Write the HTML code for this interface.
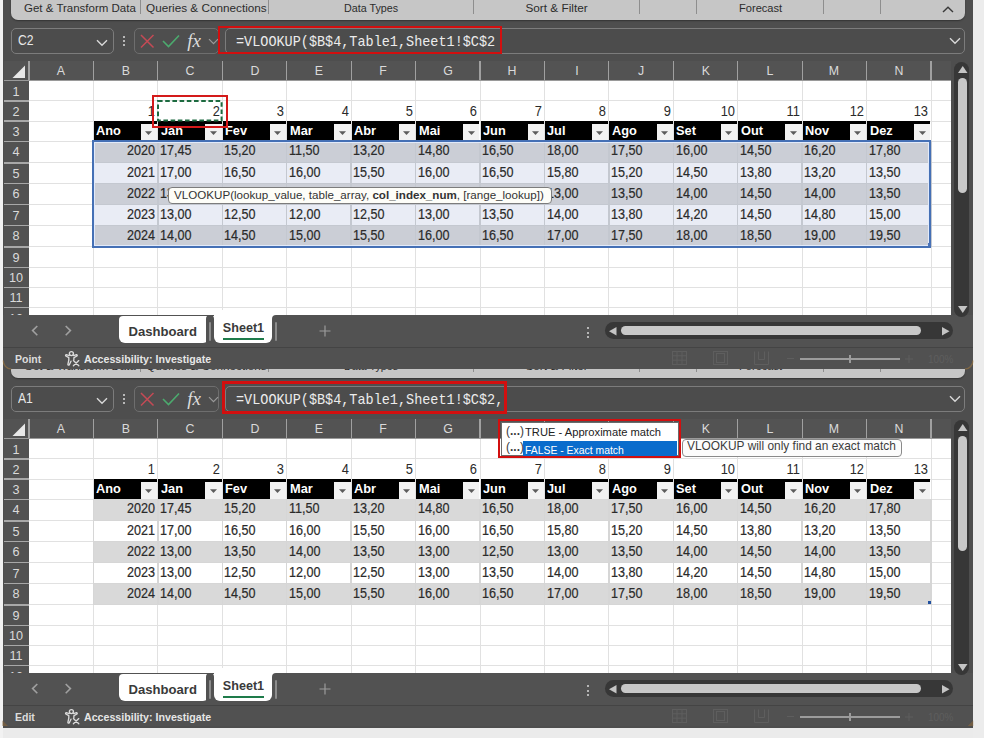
<!DOCTYPE html>
<html><head><meta charset="utf-8"><style>
*{margin:0;padding:0}
html,body{width:984px;height:738px;overflow:hidden;background:#ebebeb;font-family:"Liberation Sans",sans-serif;}
#w{position:absolute;left:0;top:0;width:984px;height:738px;overflow:hidden}
#w div,#w svg{position:absolute}
</style></head><body><div id="w">
<div style="left:0;top:0;width:3px;height:738px;background:#f2f2f2"></div>
<div style="left:973.2px;top:0;width:10.8px;height:738px;background:#ececec"></div>
<div style="left:0;top:0;width:984px;height:738px">
<div style="left:3.00px;top:300.00px;width:970.20px;height:427.60px;background:#4e4e4e;"></div>
<div style="left:10.60px;top:258.00px;width:954.00px;height:119.50px;background:#c6c6c6;border-bottom-left-radius:7px;border-bottom-right-radius:7px;box-shadow:0 1px 1.5px rgba(0,0,0,0.35);"></div>
<div style="left:23.80px;top:360.61px;font-family:'Liberation Sans',sans-serif;font-size:11.8px;line-height:11.8px;color:#2c2c2c;white-space:pre;transform:scaleX(0.975);transform-origin:left top;">Get &amp; Transform Data</div>
<div style="left:145.50px;top:360.61px;font-family:'Liberation Sans',sans-serif;font-size:11.8px;line-height:11.8px;color:#2c2c2c;white-space:pre;transform:scaleX(0.995);transform-origin:left top;">Queries &amp; Connections</div>
<div style="left:344.20px;top:360.61px;font-family:'Liberation Sans',sans-serif;font-size:11.8px;line-height:11.8px;color:#2c2c2c;white-space:pre;transform:scaleX(0.91);transform-origin:left top;">Data Types</div>
<div style="left:525.40px;top:360.61px;font-family:'Liberation Sans',sans-serif;font-size:11.8px;line-height:11.8px;color:#2c2c2c;white-space:pre;">Sort &amp; Filter</div>
<div style="left:738.80px;top:360.61px;font-family:'Liberation Sans',sans-serif;font-size:11.8px;line-height:11.8px;color:#2c2c2c;white-space:pre;transform:scaleX(0.94);transform-origin:left top;">Forecast</div>
<div style="left:140.20px;top:353.00px;width:1.00px;height:19.00px;background:#8e8e8e;"></div>
<div style="left:267.50px;top:353.00px;width:1.00px;height:19.00px;background:#8e8e8e;"></div>
<div style="left:472.50px;top:353.00px;width:1.00px;height:19.00px;background:#8e8e8e;"></div>
<div style="left:638.80px;top:353.00px;width:1.00px;height:19.00px;background:#8e8e8e;"></div>
<div style="left:696.00px;top:353.00px;width:1.00px;height:19.00px;background:#8e8e8e;"></div>
<div style="left:823.20px;top:353.00px;width:1.00px;height:19.00px;background:#8e8e8e;"></div>
<div style="left:880.40px;top:353.00px;width:1.00px;height:19.00px;background:#8e8e8e;"></div>
<div style="left:11.00px;top:386.00px;width:103.00px;height:26.00px;box-sizing:border-box;border:1.5px solid #7c7c7c;border-radius:5px;background:#4c4c4c;"></div>
<div style="left:17.60px;top:391.23px;font-family:'Liberation Sans',sans-serif;font-size:14.8px;line-height:14.8px;color:#e8e8e8;white-space:pre;transform:scaleX(0.82);transform-origin:left top;">A1</div>
<svg style="left:96px;top:396.5px" width="12" height="8"><path d="M1 1.2 L6 6.2 L11 1.2" stroke="#d8d8d8" stroke-width="1.4" fill="none"/></svg>
<div style="left:122.90px;top:393.60px;width:2.20px;height:2.20px;background:#dcdcdc;border-radius:1px;"></div>
<div style="left:122.90px;top:397.60px;width:2.20px;height:2.20px;background:#dcdcdc;border-radius:1px;"></div>
<div style="left:122.90px;top:401.60px;width:2.20px;height:2.20px;background:#dcdcdc;border-radius:1px;"></div>
<div style="left:134.00px;top:386.00px;width:84.50px;height:25.50px;box-sizing:border-box;border:1.3px solid #6e6e6e;border-radius:5px;"></div>
<svg style="left:140px;top:391.5px" width="15" height="15"><path d="M1 1 L13.5 13.5 M13.5 1 L1 13.5" stroke="#c44a55" stroke-width="1.5" fill="none"/></svg>
<svg style="left:162px;top:391.5px" width="18" height="14"><path d="M1 7 L6.5 12.5 L17 1.5" stroke="#4caa6e" stroke-width="1.6" fill="none"/></svg>
<div style="left:187.20px;top:388.70px;font-family:'Liberation Serif',serif;font-size:19px;line-height:19px;color:#dcdcdc;white-space:pre;font-style:italic;">fx</div>
<svg style="left:207.5px;top:395.5px" width="11" height="8"><path d="M1 1.2 L5.5 5.7 L10 1.2" stroke="#9a9a9a" stroke-width="1.2" fill="none"/></svg>
<div style="left:224.50px;top:386.40px;width:740.10px;height:25.20px;box-sizing:border-box;border:1.5px solid #7c7c7c;border-radius:5px;background:#4c4c4c;"></div>
<div style="left:236.00px;top:393.02px;font-family:'Liberation Mono',monospace;font-size:14.8px;line-height:14.8px;color:#ececec;white-space:pre;transform:scaleX(0.912);transform-origin:left top;">=VLOOKUP($B$4,Table1,Sheet1!$C$2,</div>
<svg style="left:949px;top:394.5px" width="12" height="8"><path d="M1 1.2 L6 6.2 L11 1.2" stroke="#d8d8d8" stroke-width="1.4" fill="none"/></svg>
<div style="left:4.00px;top:418.50px;width:947.00px;height:20.20px;background:#535353;"></div>
<svg style="left:12px;top:422.5px" width="14" height="14"><path d="M13 0.5 L13 13 L0.5 13 Z" fill="#e8e8e8"/></svg>
<div style="left:28.40px;top:419.00px;width:1.20px;height:20.00px;background:#a0a0a0;"></div>
<div style="left:92.83px;top:419.00px;width:1.20px;height:20.00px;background:#a0a0a0;"></div>
<div style="left:157.26px;top:419.00px;width:1.20px;height:20.00px;background:#a0a0a0;"></div>
<div style="left:221.69px;top:419.00px;width:1.20px;height:20.00px;background:#a0a0a0;"></div>
<div style="left:286.12px;top:419.00px;width:1.20px;height:20.00px;background:#a0a0a0;"></div>
<div style="left:350.55px;top:419.00px;width:1.20px;height:20.00px;background:#a0a0a0;"></div>
<div style="left:414.98px;top:419.00px;width:1.20px;height:20.00px;background:#a0a0a0;"></div>
<div style="left:479.41px;top:419.00px;width:1.20px;height:20.00px;background:#a0a0a0;"></div>
<div style="left:543.84px;top:419.00px;width:1.20px;height:20.00px;background:#a0a0a0;"></div>
<div style="left:608.27px;top:419.00px;width:1.20px;height:20.00px;background:#a0a0a0;"></div>
<div style="left:672.70px;top:419.00px;width:1.20px;height:20.00px;background:#a0a0a0;"></div>
<div style="left:737.13px;top:419.00px;width:1.20px;height:20.00px;background:#a0a0a0;"></div>
<div style="left:801.56px;top:419.00px;width:1.20px;height:20.00px;background:#a0a0a0;"></div>
<div style="left:865.99px;top:419.00px;width:1.20px;height:20.00px;background:#a0a0a0;"></div>
<div style="left:930.42px;top:419.00px;width:1.20px;height:20.00px;background:#a0a0a0;"></div>
<div style="left:31.22px;top:421.72px;width:60px;text-align:center;font-family:'Liberation Sans',sans-serif;font-size:13px;line-height:13px;color:#dadada;white-space:pre;transform:scaleX(0.95);transform-origin:center top;">A</div>
<div style="left:95.65px;top:421.72px;width:60px;text-align:center;font-family:'Liberation Sans',sans-serif;font-size:13px;line-height:13px;color:#dadada;white-space:pre;transform:scaleX(0.95);transform-origin:center top;">B</div>
<div style="left:160.08px;top:421.72px;width:60px;text-align:center;font-family:'Liberation Sans',sans-serif;font-size:13px;line-height:13px;color:#dadada;white-space:pre;transform:scaleX(0.95);transform-origin:center top;">C</div>
<div style="left:224.51px;top:421.72px;width:60px;text-align:center;font-family:'Liberation Sans',sans-serif;font-size:13px;line-height:13px;color:#dadada;white-space:pre;transform:scaleX(0.95);transform-origin:center top;">D</div>
<div style="left:288.94px;top:421.72px;width:60px;text-align:center;font-family:'Liberation Sans',sans-serif;font-size:13px;line-height:13px;color:#dadada;white-space:pre;transform:scaleX(0.95);transform-origin:center top;">E</div>
<div style="left:353.37px;top:421.72px;width:60px;text-align:center;font-family:'Liberation Sans',sans-serif;font-size:13px;line-height:13px;color:#dadada;white-space:pre;transform:scaleX(0.95);transform-origin:center top;">F</div>
<div style="left:417.80px;top:421.72px;width:60px;text-align:center;font-family:'Liberation Sans',sans-serif;font-size:13px;line-height:13px;color:#dadada;white-space:pre;transform:scaleX(0.95);transform-origin:center top;">G</div>
<div style="left:482.23px;top:421.72px;width:60px;text-align:center;font-family:'Liberation Sans',sans-serif;font-size:13px;line-height:13px;color:#dadada;white-space:pre;transform:scaleX(0.95);transform-origin:center top;">H</div>
<div style="left:546.66px;top:421.72px;width:60px;text-align:center;font-family:'Liberation Sans',sans-serif;font-size:13px;line-height:13px;color:#dadada;white-space:pre;transform:scaleX(0.95);transform-origin:center top;">I</div>
<div style="left:611.09px;top:421.72px;width:60px;text-align:center;font-family:'Liberation Sans',sans-serif;font-size:13px;line-height:13px;color:#dadada;white-space:pre;transform:scaleX(0.95);transform-origin:center top;">J</div>
<div style="left:675.52px;top:421.72px;width:60px;text-align:center;font-family:'Liberation Sans',sans-serif;font-size:13px;line-height:13px;color:#dadada;white-space:pre;transform:scaleX(0.95);transform-origin:center top;">K</div>
<div style="left:739.95px;top:421.72px;width:60px;text-align:center;font-family:'Liberation Sans',sans-serif;font-size:13px;line-height:13px;color:#dadada;white-space:pre;transform:scaleX(0.95);transform-origin:center top;">L</div>
<div style="left:804.38px;top:421.72px;width:60px;text-align:center;font-family:'Liberation Sans',sans-serif;font-size:13px;line-height:13px;color:#dadada;white-space:pre;transform:scaleX(0.95);transform-origin:center top;">M</div>
<div style="left:868.81px;top:421.72px;width:60px;text-align:center;font-family:'Liberation Sans',sans-serif;font-size:13px;line-height:13px;color:#dadada;white-space:pre;transform:scaleX(0.95);transform-origin:center top;">N</div>
<div style="left:29.00px;top:438.70px;width:922.00px;height:234.30px;background:#fff;"></div>
<div style="left:4.00px;top:438.70px;width:24.60px;height:234.30px;background:#525252;"></div>
<div style="left:4.00px;top:458.20px;width:24.60px;height:1.40px;background:#a8a8a8;"></div>
<div style="left:4.00px;top:478.40px;width:24.60px;height:1.40px;background:#a8a8a8;"></div>
<div style="left:4.00px;top:498.50px;width:24.60px;height:1.40px;background:#a8a8a8;"></div>
<div style="left:4.00px;top:520.20px;width:24.60px;height:1.40px;background:#a8a8a8;"></div>
<div style="left:4.00px;top:540.90px;width:24.60px;height:1.40px;background:#a8a8a8;"></div>
<div style="left:4.00px;top:562.00px;width:24.60px;height:1.40px;background:#a8a8a8;"></div>
<div style="left:4.00px;top:582.90px;width:24.60px;height:1.40px;background:#a8a8a8;"></div>
<div style="left:4.00px;top:604.20px;width:24.60px;height:1.40px;background:#a8a8a8;"></div>
<div style="left:4.00px;top:624.60px;width:24.60px;height:1.40px;background:#a8a8a8;"></div>
<div style="left:4.00px;top:644.90px;width:24.60px;height:1.40px;background:#a8a8a8;"></div>
<div style="left:4.00px;top:665.10px;width:24.60px;height:1.40px;background:#a8a8a8;"></div>
<div style="left:4.20px;top:442.57px;width:24px;text-align:center;font-family:'Liberation Sans',sans-serif;font-size:13.3px;line-height:13.3px;color:#dadada;white-space:pre;transform:scaleX(0.95);transform-origin:center top;">1</div>
<div style="left:4.20px;top:462.77px;width:24px;text-align:center;font-family:'Liberation Sans',sans-serif;font-size:13.3px;line-height:13.3px;color:#dadada;white-space:pre;transform:scaleX(0.95);transform-origin:center top;">2</div>
<div style="left:4.20px;top:482.97px;width:24px;text-align:center;font-family:'Liberation Sans',sans-serif;font-size:13.3px;line-height:13.3px;color:#dadada;white-space:pre;transform:scaleX(0.95);transform-origin:center top;">3</div>
<div style="left:4.20px;top:503.07px;width:24px;text-align:center;font-family:'Liberation Sans',sans-serif;font-size:13.3px;line-height:13.3px;color:#dadada;white-space:pre;transform:scaleX(0.95);transform-origin:center top;">4</div>
<div style="left:4.20px;top:524.77px;width:24px;text-align:center;font-family:'Liberation Sans',sans-serif;font-size:13.3px;line-height:13.3px;color:#dadada;white-space:pre;transform:scaleX(0.95);transform-origin:center top;">5</div>
<div style="left:4.20px;top:545.47px;width:24px;text-align:center;font-family:'Liberation Sans',sans-serif;font-size:13.3px;line-height:13.3px;color:#dadada;white-space:pre;transform:scaleX(0.95);transform-origin:center top;">6</div>
<div style="left:4.20px;top:566.57px;width:24px;text-align:center;font-family:'Liberation Sans',sans-serif;font-size:13.3px;line-height:13.3px;color:#dadada;white-space:pre;transform:scaleX(0.95);transform-origin:center top;">7</div>
<div style="left:4.20px;top:587.47px;width:24px;text-align:center;font-family:'Liberation Sans',sans-serif;font-size:13.3px;line-height:13.3px;color:#dadada;white-space:pre;transform:scaleX(0.95);transform-origin:center top;">8</div>
<div style="left:4.20px;top:608.77px;width:24px;text-align:center;font-family:'Liberation Sans',sans-serif;font-size:13.3px;line-height:13.3px;color:#dadada;white-space:pre;transform:scaleX(0.95);transform-origin:center top;">9</div>
<div style="left:4.20px;top:629.17px;width:24px;text-align:center;font-family:'Liberation Sans',sans-serif;font-size:13.3px;line-height:13.3px;color:#dadada;white-space:pre;transform:scaleX(0.95);transform-origin:center top;">10</div>
<div style="left:4.20px;top:649.47px;width:24px;text-align:center;font-family:'Liberation Sans',sans-serif;font-size:13.3px;line-height:13.3px;color:#dadada;white-space:pre;transform:scaleX(0.95);transform-origin:center top;">11</div>
<div style="left:4.20px;top:669.67px;width:24px;text-align:center;font-family:'Liberation Sans',sans-serif;font-size:13.3px;line-height:13.3px;color:#dadada;white-space:pre;transform:scaleX(0.95);transform-origin:center top;">12</div>
<div style="left:4.00px;top:438.20px;width:947.00px;height:1.00px;background:#9a9a9a;"></div>
<div style="left:92.93px;top:438.70px;width:1.00px;height:234.30px;background:#e1e1e1;"></div>
<div style="left:157.36px;top:438.70px;width:1.00px;height:234.30px;background:#e1e1e1;"></div>
<div style="left:221.79px;top:438.70px;width:1.00px;height:234.30px;background:#e1e1e1;"></div>
<div style="left:286.22px;top:438.70px;width:1.00px;height:234.30px;background:#e1e1e1;"></div>
<div style="left:350.65px;top:438.70px;width:1.00px;height:234.30px;background:#e1e1e1;"></div>
<div style="left:415.08px;top:438.70px;width:1.00px;height:234.30px;background:#e1e1e1;"></div>
<div style="left:479.51px;top:438.70px;width:1.00px;height:234.30px;background:#e1e1e1;"></div>
<div style="left:543.94px;top:438.70px;width:1.00px;height:234.30px;background:#e1e1e1;"></div>
<div style="left:608.37px;top:438.70px;width:1.00px;height:234.30px;background:#e1e1e1;"></div>
<div style="left:672.80px;top:438.70px;width:1.00px;height:234.30px;background:#e1e1e1;"></div>
<div style="left:737.23px;top:438.70px;width:1.00px;height:234.30px;background:#e1e1e1;"></div>
<div style="left:801.66px;top:438.70px;width:1.00px;height:234.30px;background:#e1e1e1;"></div>
<div style="left:866.09px;top:438.70px;width:1.00px;height:234.30px;background:#e1e1e1;"></div>
<div style="left:930.52px;top:438.70px;width:1.00px;height:234.30px;background:#e1e1e1;"></div>
<div style="left:29.00px;top:458.40px;width:922.00px;height:1.00px;background:#e1e1e1;"></div>
<div style="left:29.00px;top:478.60px;width:922.00px;height:1.00px;background:#e1e1e1;"></div>
<div style="left:29.00px;top:498.70px;width:922.00px;height:1.00px;background:#e1e1e1;"></div>
<div style="left:29.00px;top:520.40px;width:922.00px;height:1.00px;background:#e1e1e1;"></div>
<div style="left:29.00px;top:541.10px;width:922.00px;height:1.00px;background:#e1e1e1;"></div>
<div style="left:29.00px;top:562.20px;width:922.00px;height:1.00px;background:#e1e1e1;"></div>
<div style="left:29.00px;top:583.10px;width:922.00px;height:1.00px;background:#e1e1e1;"></div>
<div style="left:29.00px;top:604.40px;width:922.00px;height:1.00px;background:#e1e1e1;"></div>
<div style="left:29.00px;top:624.80px;width:922.00px;height:1.00px;background:#e1e1e1;"></div>
<div style="left:29.00px;top:645.10px;width:922.00px;height:1.00px;background:#e1e1e1;"></div>
<div style="left:29.00px;top:665.30px;width:922.00px;height:1.00px;background:#e1e1e1;"></div>
<div style="left:95.26px;top:462.26px;width:60px;text-align:right;font-family:'Liberation Sans',sans-serif;font-size:14px;line-height:14px;color:#2a2a2a;white-space:pre;transform:scaleX(0.92);transform-origin:right top;">1</div>
<div style="left:159.69px;top:462.26px;width:60px;text-align:right;font-family:'Liberation Sans',sans-serif;font-size:14px;line-height:14px;color:#2a2a2a;white-space:pre;transform:scaleX(0.92);transform-origin:right top;">2</div>
<div style="left:224.12px;top:462.26px;width:60px;text-align:right;font-family:'Liberation Sans',sans-serif;font-size:14px;line-height:14px;color:#2a2a2a;white-space:pre;transform:scaleX(0.92);transform-origin:right top;">3</div>
<div style="left:288.55px;top:462.26px;width:60px;text-align:right;font-family:'Liberation Sans',sans-serif;font-size:14px;line-height:14px;color:#2a2a2a;white-space:pre;transform:scaleX(0.92);transform-origin:right top;">4</div>
<div style="left:352.98px;top:462.26px;width:60px;text-align:right;font-family:'Liberation Sans',sans-serif;font-size:14px;line-height:14px;color:#2a2a2a;white-space:pre;transform:scaleX(0.92);transform-origin:right top;">5</div>
<div style="left:417.41px;top:462.26px;width:60px;text-align:right;font-family:'Liberation Sans',sans-serif;font-size:14px;line-height:14px;color:#2a2a2a;white-space:pre;transform:scaleX(0.92);transform-origin:right top;">6</div>
<div style="left:481.84px;top:462.26px;width:60px;text-align:right;font-family:'Liberation Sans',sans-serif;font-size:14px;line-height:14px;color:#2a2a2a;white-space:pre;transform:scaleX(0.92);transform-origin:right top;">7</div>
<div style="left:546.27px;top:462.26px;width:60px;text-align:right;font-family:'Liberation Sans',sans-serif;font-size:14px;line-height:14px;color:#2a2a2a;white-space:pre;transform:scaleX(0.92);transform-origin:right top;">8</div>
<div style="left:610.70px;top:462.26px;width:60px;text-align:right;font-family:'Liberation Sans',sans-serif;font-size:14px;line-height:14px;color:#2a2a2a;white-space:pre;transform:scaleX(0.92);transform-origin:right top;">9</div>
<div style="left:675.13px;top:462.26px;width:60px;text-align:right;font-family:'Liberation Sans',sans-serif;font-size:14px;line-height:14px;color:#2a2a2a;white-space:pre;transform:scaleX(0.92);transform-origin:right top;">10</div>
<div style="left:739.56px;top:462.26px;width:60px;text-align:right;font-family:'Liberation Sans',sans-serif;font-size:14px;line-height:14px;color:#2a2a2a;white-space:pre;transform:scaleX(0.92);transform-origin:right top;">11</div>
<div style="left:803.99px;top:462.26px;width:60px;text-align:right;font-family:'Liberation Sans',sans-serif;font-size:14px;line-height:14px;color:#2a2a2a;white-space:pre;transform:scaleX(0.92);transform-origin:right top;">12</div>
<div style="left:868.42px;top:462.26px;width:60px;text-align:right;font-family:'Liberation Sans',sans-serif;font-size:14px;line-height:14px;color:#2a2a2a;white-space:pre;transform:scaleX(0.92);transform-origin:right top;">13</div>
<div style="left:94.03px;top:479.30px;width:63.23px;height:19.90px;background:#000;"></div>
<div style="left:96.43px;top:481.52px;font-family:'Liberation Sans',sans-serif;font-size:13.6px;line-height:13.6px;color:#ffffff;white-space:pre;font-weight:bold;transform:scaleX(0.94);transform-origin:left top;">Ano</div>
<div style="left:141.06px;top:481.70px;width:16.20px;height:17.50px;background:#f2f2f2;"></div>
<svg style="left:145.46px;top:488.60px" width="8" height="5"><path d="M0 0.2 L7 0.2 L3.5 4 Z" fill="#5c5c5c"/></svg>
<div style="left:158.46px;top:479.30px;width:63.23px;height:19.90px;background:#000;"></div>
<div style="left:160.86px;top:481.52px;font-family:'Liberation Sans',sans-serif;font-size:13.6px;line-height:13.6px;color:#ffffff;white-space:pre;font-weight:bold;transform:scaleX(0.94);transform-origin:left top;">Jan</div>
<div style="left:205.49px;top:481.70px;width:16.20px;height:17.50px;background:#f2f2f2;"></div>
<svg style="left:209.89px;top:488.60px" width="8" height="5"><path d="M0 0.2 L7 0.2 L3.5 4 Z" fill="#5c5c5c"/></svg>
<div style="left:222.89px;top:479.30px;width:63.23px;height:19.90px;background:#000;"></div>
<div style="left:225.29px;top:481.52px;font-family:'Liberation Sans',sans-serif;font-size:13.6px;line-height:13.6px;color:#ffffff;white-space:pre;font-weight:bold;transform:scaleX(0.94);transform-origin:left top;">Fev</div>
<div style="left:269.92px;top:481.70px;width:16.20px;height:17.50px;background:#f2f2f2;"></div>
<svg style="left:274.32px;top:488.60px" width="8" height="5"><path d="M0 0.2 L7 0.2 L3.5 4 Z" fill="#5c5c5c"/></svg>
<div style="left:287.32px;top:479.30px;width:63.23px;height:19.90px;background:#000;"></div>
<div style="left:289.72px;top:481.52px;font-family:'Liberation Sans',sans-serif;font-size:13.6px;line-height:13.6px;color:#ffffff;white-space:pre;font-weight:bold;transform:scaleX(0.94);transform-origin:left top;">Mar</div>
<div style="left:334.35px;top:481.70px;width:16.20px;height:17.50px;background:#f2f2f2;"></div>
<svg style="left:338.75px;top:488.60px" width="8" height="5"><path d="M0 0.2 L7 0.2 L3.5 4 Z" fill="#5c5c5c"/></svg>
<div style="left:351.75px;top:479.30px;width:63.23px;height:19.90px;background:#000;"></div>
<div style="left:354.15px;top:481.52px;font-family:'Liberation Sans',sans-serif;font-size:13.6px;line-height:13.6px;color:#ffffff;white-space:pre;font-weight:bold;transform:scaleX(0.94);transform-origin:left top;">Abr</div>
<div style="left:398.78px;top:481.70px;width:16.20px;height:17.50px;background:#f2f2f2;"></div>
<svg style="left:403.18px;top:488.60px" width="8" height="5"><path d="M0 0.2 L7 0.2 L3.5 4 Z" fill="#5c5c5c"/></svg>
<div style="left:416.18px;top:479.30px;width:63.23px;height:19.90px;background:#000;"></div>
<div style="left:418.58px;top:481.52px;font-family:'Liberation Sans',sans-serif;font-size:13.6px;line-height:13.6px;color:#ffffff;white-space:pre;font-weight:bold;transform:scaleX(0.94);transform-origin:left top;">Mai</div>
<div style="left:463.21px;top:481.70px;width:16.20px;height:17.50px;background:#f2f2f2;"></div>
<svg style="left:467.61px;top:488.60px" width="8" height="5"><path d="M0 0.2 L7 0.2 L3.5 4 Z" fill="#5c5c5c"/></svg>
<div style="left:480.61px;top:479.30px;width:63.23px;height:19.90px;background:#000;"></div>
<div style="left:483.01px;top:481.52px;font-family:'Liberation Sans',sans-serif;font-size:13.6px;line-height:13.6px;color:#ffffff;white-space:pre;font-weight:bold;transform:scaleX(0.94);transform-origin:left top;">Jun</div>
<div style="left:527.64px;top:481.70px;width:16.20px;height:17.50px;background:#f2f2f2;"></div>
<svg style="left:532.04px;top:488.60px" width="8" height="5"><path d="M0 0.2 L7 0.2 L3.5 4 Z" fill="#5c5c5c"/></svg>
<div style="left:545.04px;top:479.30px;width:63.23px;height:19.90px;background:#000;"></div>
<div style="left:547.44px;top:481.52px;font-family:'Liberation Sans',sans-serif;font-size:13.6px;line-height:13.6px;color:#ffffff;white-space:pre;font-weight:bold;transform:scaleX(0.94);transform-origin:left top;">Jul</div>
<div style="left:592.07px;top:481.70px;width:16.20px;height:17.50px;background:#f2f2f2;"></div>
<svg style="left:596.47px;top:488.60px" width="8" height="5"><path d="M0 0.2 L7 0.2 L3.5 4 Z" fill="#5c5c5c"/></svg>
<div style="left:609.47px;top:479.30px;width:63.23px;height:19.90px;background:#000;"></div>
<div style="left:611.87px;top:481.52px;font-family:'Liberation Sans',sans-serif;font-size:13.6px;line-height:13.6px;color:#ffffff;white-space:pre;font-weight:bold;transform:scaleX(0.94);transform-origin:left top;">Ago</div>
<div style="left:656.50px;top:481.70px;width:16.20px;height:17.50px;background:#f2f2f2;"></div>
<svg style="left:660.90px;top:488.60px" width="8" height="5"><path d="M0 0.2 L7 0.2 L3.5 4 Z" fill="#5c5c5c"/></svg>
<div style="left:673.90px;top:479.30px;width:63.23px;height:19.90px;background:#000;"></div>
<div style="left:676.30px;top:481.52px;font-family:'Liberation Sans',sans-serif;font-size:13.6px;line-height:13.6px;color:#ffffff;white-space:pre;font-weight:bold;transform:scaleX(0.94);transform-origin:left top;">Set</div>
<div style="left:720.93px;top:481.70px;width:16.20px;height:17.50px;background:#f2f2f2;"></div>
<svg style="left:725.33px;top:488.60px" width="8" height="5"><path d="M0 0.2 L7 0.2 L3.5 4 Z" fill="#5c5c5c"/></svg>
<div style="left:738.33px;top:479.30px;width:63.23px;height:19.90px;background:#000;"></div>
<div style="left:740.73px;top:481.52px;font-family:'Liberation Sans',sans-serif;font-size:13.6px;line-height:13.6px;color:#ffffff;white-space:pre;font-weight:bold;transform:scaleX(0.94);transform-origin:left top;">Out</div>
<div style="left:785.36px;top:481.70px;width:16.20px;height:17.50px;background:#f2f2f2;"></div>
<svg style="left:789.76px;top:488.60px" width="8" height="5"><path d="M0 0.2 L7 0.2 L3.5 4 Z" fill="#5c5c5c"/></svg>
<div style="left:802.76px;top:479.30px;width:63.23px;height:19.90px;background:#000;"></div>
<div style="left:805.16px;top:481.52px;font-family:'Liberation Sans',sans-serif;font-size:13.6px;line-height:13.6px;color:#ffffff;white-space:pre;font-weight:bold;transform:scaleX(0.94);transform-origin:left top;">Nov</div>
<div style="left:849.79px;top:481.70px;width:16.20px;height:17.50px;background:#f2f2f2;"></div>
<svg style="left:854.19px;top:488.60px" width="8" height="5"><path d="M0 0.2 L7 0.2 L3.5 4 Z" fill="#5c5c5c"/></svg>
<div style="left:867.19px;top:479.30px;width:63.23px;height:19.90px;background:#000;"></div>
<div style="left:869.59px;top:481.52px;font-family:'Liberation Sans',sans-serif;font-size:13.6px;line-height:13.6px;color:#ffffff;white-space:pre;font-weight:bold;transform:scaleX(0.94);transform-origin:left top;">Dez</div>
<div style="left:914.22px;top:481.70px;width:16.20px;height:17.50px;background:#f2f2f2;"></div>
<svg style="left:918.62px;top:488.60px" width="8" height="5"><path d="M0 0.2 L7 0.2 L3.5 4 Z" fill="#5c5c5c"/></svg>
<div style="left:93.43px;top:499.20px;width:837.59px;height:21.70px;background:#d9d9d9;"></div>
<div style="left:92.73px;top:499.20px;width:1.40px;height:21.70px;background:#d6d6d6;"></div>
<div style="left:157.16px;top:499.20px;width:1.40px;height:21.70px;background:#d6d6d6;"></div>
<div style="left:221.59px;top:499.20px;width:1.40px;height:21.70px;background:#d6d6d6;"></div>
<div style="left:286.02px;top:499.20px;width:1.40px;height:21.70px;background:#d6d6d6;"></div>
<div style="left:350.45px;top:499.20px;width:1.40px;height:21.70px;background:#d6d6d6;"></div>
<div style="left:414.88px;top:499.20px;width:1.40px;height:21.70px;background:#d6d6d6;"></div>
<div style="left:479.31px;top:499.20px;width:1.40px;height:21.70px;background:#d6d6d6;"></div>
<div style="left:543.74px;top:499.20px;width:1.40px;height:21.70px;background:#d6d6d6;"></div>
<div style="left:608.17px;top:499.20px;width:1.40px;height:21.70px;background:#d6d6d6;"></div>
<div style="left:672.60px;top:499.20px;width:1.40px;height:21.70px;background:#d6d6d6;"></div>
<div style="left:737.03px;top:499.20px;width:1.40px;height:21.70px;background:#d6d6d6;"></div>
<div style="left:801.46px;top:499.20px;width:1.40px;height:21.70px;background:#d6d6d6;"></div>
<div style="left:865.89px;top:499.20px;width:1.40px;height:21.70px;background:#d6d6d6;"></div>
<div style="left:930.32px;top:499.20px;width:1.40px;height:21.70px;background:#d6d6d6;"></div>
<div style="left:93.43px;top:520.40px;width:837.59px;height:1.00px;background:#d6d6d6;"></div>
<div style="left:95.26px;top:501.36px;width:60px;text-align:right;font-family:'Liberation Sans',sans-serif;font-size:14px;line-height:14px;color:#2a2a2a;white-space:pre;transform:scaleX(0.9);transform-origin:right top;-webkit-text-stroke:0.2px #2a2a2a;">2020</div>
<div style="left:160.06px;top:501.36px;font-family:'Liberation Sans',sans-serif;font-size:14px;line-height:14px;color:#2a2a2a;white-space:pre;transform:scaleX(0.9);transform-origin:left top;-webkit-text-stroke:0.2px #2a2a2a;">17,45</div>
<div style="left:224.49px;top:501.36px;font-family:'Liberation Sans',sans-serif;font-size:14px;line-height:14px;color:#2a2a2a;white-space:pre;transform:scaleX(0.9);transform-origin:left top;-webkit-text-stroke:0.2px #2a2a2a;">15,20</div>
<div style="left:288.92px;top:501.36px;font-family:'Liberation Sans',sans-serif;font-size:14px;line-height:14px;color:#2a2a2a;white-space:pre;transform:scaleX(0.9);transform-origin:left top;-webkit-text-stroke:0.2px #2a2a2a;">11,50</div>
<div style="left:353.35px;top:501.36px;font-family:'Liberation Sans',sans-serif;font-size:14px;line-height:14px;color:#2a2a2a;white-space:pre;transform:scaleX(0.9);transform-origin:left top;-webkit-text-stroke:0.2px #2a2a2a;">13,20</div>
<div style="left:417.78px;top:501.36px;font-family:'Liberation Sans',sans-serif;font-size:14px;line-height:14px;color:#2a2a2a;white-space:pre;transform:scaleX(0.9);transform-origin:left top;-webkit-text-stroke:0.2px #2a2a2a;">14,80</div>
<div style="left:482.21px;top:501.36px;font-family:'Liberation Sans',sans-serif;font-size:14px;line-height:14px;color:#2a2a2a;white-space:pre;transform:scaleX(0.9);transform-origin:left top;-webkit-text-stroke:0.2px #2a2a2a;">16,50</div>
<div style="left:546.64px;top:501.36px;font-family:'Liberation Sans',sans-serif;font-size:14px;line-height:14px;color:#2a2a2a;white-space:pre;transform:scaleX(0.9);transform-origin:left top;-webkit-text-stroke:0.2px #2a2a2a;">18,00</div>
<div style="left:611.07px;top:501.36px;font-family:'Liberation Sans',sans-serif;font-size:14px;line-height:14px;color:#2a2a2a;white-space:pre;transform:scaleX(0.9);transform-origin:left top;-webkit-text-stroke:0.2px #2a2a2a;">17,50</div>
<div style="left:675.50px;top:501.36px;font-family:'Liberation Sans',sans-serif;font-size:14px;line-height:14px;color:#2a2a2a;white-space:pre;transform:scaleX(0.9);transform-origin:left top;-webkit-text-stroke:0.2px #2a2a2a;">16,00</div>
<div style="left:739.93px;top:501.36px;font-family:'Liberation Sans',sans-serif;font-size:14px;line-height:14px;color:#2a2a2a;white-space:pre;transform:scaleX(0.9);transform-origin:left top;-webkit-text-stroke:0.2px #2a2a2a;">14,50</div>
<div style="left:804.36px;top:501.36px;font-family:'Liberation Sans',sans-serif;font-size:14px;line-height:14px;color:#2a2a2a;white-space:pre;transform:scaleX(0.9);transform-origin:left top;-webkit-text-stroke:0.2px #2a2a2a;">16,20</div>
<div style="left:868.79px;top:501.36px;font-family:'Liberation Sans',sans-serif;font-size:14px;line-height:14px;color:#2a2a2a;white-space:pre;transform:scaleX(0.9);transform-origin:left top;-webkit-text-stroke:0.2px #2a2a2a;">17,80</div>
<div style="left:93.43px;top:520.90px;width:837.59px;height:20.70px;background:#ffffff;"></div>
<div style="left:92.73px;top:520.90px;width:1.40px;height:20.70px;background:#d6d6d6;"></div>
<div style="left:157.16px;top:520.90px;width:1.40px;height:20.70px;background:#d6d6d6;"></div>
<div style="left:221.59px;top:520.90px;width:1.40px;height:20.70px;background:#d6d6d6;"></div>
<div style="left:286.02px;top:520.90px;width:1.40px;height:20.70px;background:#d6d6d6;"></div>
<div style="left:350.45px;top:520.90px;width:1.40px;height:20.70px;background:#d6d6d6;"></div>
<div style="left:414.88px;top:520.90px;width:1.40px;height:20.70px;background:#d6d6d6;"></div>
<div style="left:479.31px;top:520.90px;width:1.40px;height:20.70px;background:#d6d6d6;"></div>
<div style="left:543.74px;top:520.90px;width:1.40px;height:20.70px;background:#d6d6d6;"></div>
<div style="left:608.17px;top:520.90px;width:1.40px;height:20.70px;background:#d6d6d6;"></div>
<div style="left:672.60px;top:520.90px;width:1.40px;height:20.70px;background:#d6d6d6;"></div>
<div style="left:737.03px;top:520.90px;width:1.40px;height:20.70px;background:#d6d6d6;"></div>
<div style="left:801.46px;top:520.90px;width:1.40px;height:20.70px;background:#d6d6d6;"></div>
<div style="left:865.89px;top:520.90px;width:1.40px;height:20.70px;background:#d6d6d6;"></div>
<div style="left:930.32px;top:520.90px;width:1.40px;height:20.70px;background:#d6d6d6;"></div>
<div style="left:93.43px;top:541.10px;width:837.59px;height:1.00px;background:#d6d6d6;"></div>
<div style="left:95.26px;top:523.06px;width:60px;text-align:right;font-family:'Liberation Sans',sans-serif;font-size:14px;line-height:14px;color:#2a2a2a;white-space:pre;transform:scaleX(0.9);transform-origin:right top;-webkit-text-stroke:0.2px #2a2a2a;">2021</div>
<div style="left:160.06px;top:523.06px;font-family:'Liberation Sans',sans-serif;font-size:14px;line-height:14px;color:#2a2a2a;white-space:pre;transform:scaleX(0.9);transform-origin:left top;-webkit-text-stroke:0.2px #2a2a2a;">17,00</div>
<div style="left:224.49px;top:523.06px;font-family:'Liberation Sans',sans-serif;font-size:14px;line-height:14px;color:#2a2a2a;white-space:pre;transform:scaleX(0.9);transform-origin:left top;-webkit-text-stroke:0.2px #2a2a2a;">16,50</div>
<div style="left:288.92px;top:523.06px;font-family:'Liberation Sans',sans-serif;font-size:14px;line-height:14px;color:#2a2a2a;white-space:pre;transform:scaleX(0.9);transform-origin:left top;-webkit-text-stroke:0.2px #2a2a2a;">16,00</div>
<div style="left:353.35px;top:523.06px;font-family:'Liberation Sans',sans-serif;font-size:14px;line-height:14px;color:#2a2a2a;white-space:pre;transform:scaleX(0.9);transform-origin:left top;-webkit-text-stroke:0.2px #2a2a2a;">15,50</div>
<div style="left:417.78px;top:523.06px;font-family:'Liberation Sans',sans-serif;font-size:14px;line-height:14px;color:#2a2a2a;white-space:pre;transform:scaleX(0.9);transform-origin:left top;-webkit-text-stroke:0.2px #2a2a2a;">16,00</div>
<div style="left:482.21px;top:523.06px;font-family:'Liberation Sans',sans-serif;font-size:14px;line-height:14px;color:#2a2a2a;white-space:pre;transform:scaleX(0.9);transform-origin:left top;-webkit-text-stroke:0.2px #2a2a2a;">16,50</div>
<div style="left:546.64px;top:523.06px;font-family:'Liberation Sans',sans-serif;font-size:14px;line-height:14px;color:#2a2a2a;white-space:pre;transform:scaleX(0.9);transform-origin:left top;-webkit-text-stroke:0.2px #2a2a2a;">15,80</div>
<div style="left:611.07px;top:523.06px;font-family:'Liberation Sans',sans-serif;font-size:14px;line-height:14px;color:#2a2a2a;white-space:pre;transform:scaleX(0.9);transform-origin:left top;-webkit-text-stroke:0.2px #2a2a2a;">15,20</div>
<div style="left:675.50px;top:523.06px;font-family:'Liberation Sans',sans-serif;font-size:14px;line-height:14px;color:#2a2a2a;white-space:pre;transform:scaleX(0.9);transform-origin:left top;-webkit-text-stroke:0.2px #2a2a2a;">14,50</div>
<div style="left:739.93px;top:523.06px;font-family:'Liberation Sans',sans-serif;font-size:14px;line-height:14px;color:#2a2a2a;white-space:pre;transform:scaleX(0.9);transform-origin:left top;-webkit-text-stroke:0.2px #2a2a2a;">13,80</div>
<div style="left:804.36px;top:523.06px;font-family:'Liberation Sans',sans-serif;font-size:14px;line-height:14px;color:#2a2a2a;white-space:pre;transform:scaleX(0.9);transform-origin:left top;-webkit-text-stroke:0.2px #2a2a2a;">13,20</div>
<div style="left:868.79px;top:523.06px;font-family:'Liberation Sans',sans-serif;font-size:14px;line-height:14px;color:#2a2a2a;white-space:pre;transform:scaleX(0.9);transform-origin:left top;-webkit-text-stroke:0.2px #2a2a2a;">13,50</div>
<div style="left:93.43px;top:541.60px;width:837.59px;height:21.10px;background:#d9d9d9;"></div>
<div style="left:92.73px;top:541.60px;width:1.40px;height:21.10px;background:#d6d6d6;"></div>
<div style="left:157.16px;top:541.60px;width:1.40px;height:21.10px;background:#d6d6d6;"></div>
<div style="left:221.59px;top:541.60px;width:1.40px;height:21.10px;background:#d6d6d6;"></div>
<div style="left:286.02px;top:541.60px;width:1.40px;height:21.10px;background:#d6d6d6;"></div>
<div style="left:350.45px;top:541.60px;width:1.40px;height:21.10px;background:#d6d6d6;"></div>
<div style="left:414.88px;top:541.60px;width:1.40px;height:21.10px;background:#d6d6d6;"></div>
<div style="left:479.31px;top:541.60px;width:1.40px;height:21.10px;background:#d6d6d6;"></div>
<div style="left:543.74px;top:541.60px;width:1.40px;height:21.10px;background:#d6d6d6;"></div>
<div style="left:608.17px;top:541.60px;width:1.40px;height:21.10px;background:#d6d6d6;"></div>
<div style="left:672.60px;top:541.60px;width:1.40px;height:21.10px;background:#d6d6d6;"></div>
<div style="left:737.03px;top:541.60px;width:1.40px;height:21.10px;background:#d6d6d6;"></div>
<div style="left:801.46px;top:541.60px;width:1.40px;height:21.10px;background:#d6d6d6;"></div>
<div style="left:865.89px;top:541.60px;width:1.40px;height:21.10px;background:#d6d6d6;"></div>
<div style="left:930.32px;top:541.60px;width:1.40px;height:21.10px;background:#d6d6d6;"></div>
<div style="left:93.43px;top:562.20px;width:837.59px;height:1.00px;background:#d6d6d6;"></div>
<div style="left:95.26px;top:543.76px;width:60px;text-align:right;font-family:'Liberation Sans',sans-serif;font-size:14px;line-height:14px;color:#2a2a2a;white-space:pre;transform:scaleX(0.9);transform-origin:right top;-webkit-text-stroke:0.2px #2a2a2a;">2022</div>
<div style="left:160.06px;top:543.76px;font-family:'Liberation Sans',sans-serif;font-size:14px;line-height:14px;color:#2a2a2a;white-space:pre;transform:scaleX(0.9);transform-origin:left top;-webkit-text-stroke:0.2px #2a2a2a;">13,00</div>
<div style="left:224.49px;top:543.76px;font-family:'Liberation Sans',sans-serif;font-size:14px;line-height:14px;color:#2a2a2a;white-space:pre;transform:scaleX(0.9);transform-origin:left top;-webkit-text-stroke:0.2px #2a2a2a;">13,50</div>
<div style="left:288.92px;top:543.76px;font-family:'Liberation Sans',sans-serif;font-size:14px;line-height:14px;color:#2a2a2a;white-space:pre;transform:scaleX(0.9);transform-origin:left top;-webkit-text-stroke:0.2px #2a2a2a;">14,00</div>
<div style="left:353.35px;top:543.76px;font-family:'Liberation Sans',sans-serif;font-size:14px;line-height:14px;color:#2a2a2a;white-space:pre;transform:scaleX(0.9);transform-origin:left top;-webkit-text-stroke:0.2px #2a2a2a;">13,50</div>
<div style="left:417.78px;top:543.76px;font-family:'Liberation Sans',sans-serif;font-size:14px;line-height:14px;color:#2a2a2a;white-space:pre;transform:scaleX(0.9);transform-origin:left top;-webkit-text-stroke:0.2px #2a2a2a;">13,00</div>
<div style="left:482.21px;top:543.76px;font-family:'Liberation Sans',sans-serif;font-size:14px;line-height:14px;color:#2a2a2a;white-space:pre;transform:scaleX(0.9);transform-origin:left top;-webkit-text-stroke:0.2px #2a2a2a;">12,50</div>
<div style="left:546.64px;top:543.76px;font-family:'Liberation Sans',sans-serif;font-size:14px;line-height:14px;color:#2a2a2a;white-space:pre;transform:scaleX(0.9);transform-origin:left top;-webkit-text-stroke:0.2px #2a2a2a;">13,00</div>
<div style="left:611.07px;top:543.76px;font-family:'Liberation Sans',sans-serif;font-size:14px;line-height:14px;color:#2a2a2a;white-space:pre;transform:scaleX(0.9);transform-origin:left top;-webkit-text-stroke:0.2px #2a2a2a;">13,50</div>
<div style="left:675.50px;top:543.76px;font-family:'Liberation Sans',sans-serif;font-size:14px;line-height:14px;color:#2a2a2a;white-space:pre;transform:scaleX(0.9);transform-origin:left top;-webkit-text-stroke:0.2px #2a2a2a;">14,00</div>
<div style="left:739.93px;top:543.76px;font-family:'Liberation Sans',sans-serif;font-size:14px;line-height:14px;color:#2a2a2a;white-space:pre;transform:scaleX(0.9);transform-origin:left top;-webkit-text-stroke:0.2px #2a2a2a;">14,50</div>
<div style="left:804.36px;top:543.76px;font-family:'Liberation Sans',sans-serif;font-size:14px;line-height:14px;color:#2a2a2a;white-space:pre;transform:scaleX(0.9);transform-origin:left top;-webkit-text-stroke:0.2px #2a2a2a;">14,00</div>
<div style="left:868.79px;top:543.76px;font-family:'Liberation Sans',sans-serif;font-size:14px;line-height:14px;color:#2a2a2a;white-space:pre;transform:scaleX(0.9);transform-origin:left top;-webkit-text-stroke:0.2px #2a2a2a;">13,50</div>
<div style="left:93.43px;top:562.70px;width:837.59px;height:20.90px;background:#ffffff;"></div>
<div style="left:92.73px;top:562.70px;width:1.40px;height:20.90px;background:#d6d6d6;"></div>
<div style="left:157.16px;top:562.70px;width:1.40px;height:20.90px;background:#d6d6d6;"></div>
<div style="left:221.59px;top:562.70px;width:1.40px;height:20.90px;background:#d6d6d6;"></div>
<div style="left:286.02px;top:562.70px;width:1.40px;height:20.90px;background:#d6d6d6;"></div>
<div style="left:350.45px;top:562.70px;width:1.40px;height:20.90px;background:#d6d6d6;"></div>
<div style="left:414.88px;top:562.70px;width:1.40px;height:20.90px;background:#d6d6d6;"></div>
<div style="left:479.31px;top:562.70px;width:1.40px;height:20.90px;background:#d6d6d6;"></div>
<div style="left:543.74px;top:562.70px;width:1.40px;height:20.90px;background:#d6d6d6;"></div>
<div style="left:608.17px;top:562.70px;width:1.40px;height:20.90px;background:#d6d6d6;"></div>
<div style="left:672.60px;top:562.70px;width:1.40px;height:20.90px;background:#d6d6d6;"></div>
<div style="left:737.03px;top:562.70px;width:1.40px;height:20.90px;background:#d6d6d6;"></div>
<div style="left:801.46px;top:562.70px;width:1.40px;height:20.90px;background:#d6d6d6;"></div>
<div style="left:865.89px;top:562.70px;width:1.40px;height:20.90px;background:#d6d6d6;"></div>
<div style="left:930.32px;top:562.70px;width:1.40px;height:20.90px;background:#d6d6d6;"></div>
<div style="left:93.43px;top:583.10px;width:837.59px;height:1.00px;background:#d6d6d6;"></div>
<div style="left:95.26px;top:564.86px;width:60px;text-align:right;font-family:'Liberation Sans',sans-serif;font-size:14px;line-height:14px;color:#2a2a2a;white-space:pre;transform:scaleX(0.9);transform-origin:right top;-webkit-text-stroke:0.2px #2a2a2a;">2023</div>
<div style="left:160.06px;top:564.86px;font-family:'Liberation Sans',sans-serif;font-size:14px;line-height:14px;color:#2a2a2a;white-space:pre;transform:scaleX(0.9);transform-origin:left top;-webkit-text-stroke:0.2px #2a2a2a;">13,00</div>
<div style="left:224.49px;top:564.86px;font-family:'Liberation Sans',sans-serif;font-size:14px;line-height:14px;color:#2a2a2a;white-space:pre;transform:scaleX(0.9);transform-origin:left top;-webkit-text-stroke:0.2px #2a2a2a;">12,50</div>
<div style="left:288.92px;top:564.86px;font-family:'Liberation Sans',sans-serif;font-size:14px;line-height:14px;color:#2a2a2a;white-space:pre;transform:scaleX(0.9);transform-origin:left top;-webkit-text-stroke:0.2px #2a2a2a;">12,00</div>
<div style="left:353.35px;top:564.86px;font-family:'Liberation Sans',sans-serif;font-size:14px;line-height:14px;color:#2a2a2a;white-space:pre;transform:scaleX(0.9);transform-origin:left top;-webkit-text-stroke:0.2px #2a2a2a;">12,50</div>
<div style="left:417.78px;top:564.86px;font-family:'Liberation Sans',sans-serif;font-size:14px;line-height:14px;color:#2a2a2a;white-space:pre;transform:scaleX(0.9);transform-origin:left top;-webkit-text-stroke:0.2px #2a2a2a;">13,00</div>
<div style="left:482.21px;top:564.86px;font-family:'Liberation Sans',sans-serif;font-size:14px;line-height:14px;color:#2a2a2a;white-space:pre;transform:scaleX(0.9);transform-origin:left top;-webkit-text-stroke:0.2px #2a2a2a;">13,50</div>
<div style="left:546.64px;top:564.86px;font-family:'Liberation Sans',sans-serif;font-size:14px;line-height:14px;color:#2a2a2a;white-space:pre;transform:scaleX(0.9);transform-origin:left top;-webkit-text-stroke:0.2px #2a2a2a;">14,00</div>
<div style="left:611.07px;top:564.86px;font-family:'Liberation Sans',sans-serif;font-size:14px;line-height:14px;color:#2a2a2a;white-space:pre;transform:scaleX(0.9);transform-origin:left top;-webkit-text-stroke:0.2px #2a2a2a;">13,80</div>
<div style="left:675.50px;top:564.86px;font-family:'Liberation Sans',sans-serif;font-size:14px;line-height:14px;color:#2a2a2a;white-space:pre;transform:scaleX(0.9);transform-origin:left top;-webkit-text-stroke:0.2px #2a2a2a;">14,20</div>
<div style="left:739.93px;top:564.86px;font-family:'Liberation Sans',sans-serif;font-size:14px;line-height:14px;color:#2a2a2a;white-space:pre;transform:scaleX(0.9);transform-origin:left top;-webkit-text-stroke:0.2px #2a2a2a;">14,50</div>
<div style="left:804.36px;top:564.86px;font-family:'Liberation Sans',sans-serif;font-size:14px;line-height:14px;color:#2a2a2a;white-space:pre;transform:scaleX(0.9);transform-origin:left top;-webkit-text-stroke:0.2px #2a2a2a;">14,80</div>
<div style="left:868.79px;top:564.86px;font-family:'Liberation Sans',sans-serif;font-size:14px;line-height:14px;color:#2a2a2a;white-space:pre;transform:scaleX(0.9);transform-origin:left top;-webkit-text-stroke:0.2px #2a2a2a;">15,00</div>
<div style="left:93.43px;top:583.60px;width:837.59px;height:21.30px;background:#d9d9d9;"></div>
<div style="left:92.73px;top:583.60px;width:1.40px;height:21.30px;background:#d6d6d6;"></div>
<div style="left:157.16px;top:583.60px;width:1.40px;height:21.30px;background:#d6d6d6;"></div>
<div style="left:221.59px;top:583.60px;width:1.40px;height:21.30px;background:#d6d6d6;"></div>
<div style="left:286.02px;top:583.60px;width:1.40px;height:21.30px;background:#d6d6d6;"></div>
<div style="left:350.45px;top:583.60px;width:1.40px;height:21.30px;background:#d6d6d6;"></div>
<div style="left:414.88px;top:583.60px;width:1.40px;height:21.30px;background:#d6d6d6;"></div>
<div style="left:479.31px;top:583.60px;width:1.40px;height:21.30px;background:#d6d6d6;"></div>
<div style="left:543.74px;top:583.60px;width:1.40px;height:21.30px;background:#d6d6d6;"></div>
<div style="left:608.17px;top:583.60px;width:1.40px;height:21.30px;background:#d6d6d6;"></div>
<div style="left:672.60px;top:583.60px;width:1.40px;height:21.30px;background:#d6d6d6;"></div>
<div style="left:737.03px;top:583.60px;width:1.40px;height:21.30px;background:#d6d6d6;"></div>
<div style="left:801.46px;top:583.60px;width:1.40px;height:21.30px;background:#d6d6d6;"></div>
<div style="left:865.89px;top:583.60px;width:1.40px;height:21.30px;background:#d6d6d6;"></div>
<div style="left:930.32px;top:583.60px;width:1.40px;height:21.30px;background:#d6d6d6;"></div>
<div style="left:93.43px;top:604.40px;width:837.59px;height:1.00px;background:#d6d6d6;"></div>
<div style="left:95.26px;top:585.76px;width:60px;text-align:right;font-family:'Liberation Sans',sans-serif;font-size:14px;line-height:14px;color:#2a2a2a;white-space:pre;transform:scaleX(0.9);transform-origin:right top;-webkit-text-stroke:0.2px #2a2a2a;">2024</div>
<div style="left:160.06px;top:585.76px;font-family:'Liberation Sans',sans-serif;font-size:14px;line-height:14px;color:#2a2a2a;white-space:pre;transform:scaleX(0.9);transform-origin:left top;-webkit-text-stroke:0.2px #2a2a2a;">14,00</div>
<div style="left:224.49px;top:585.76px;font-family:'Liberation Sans',sans-serif;font-size:14px;line-height:14px;color:#2a2a2a;white-space:pre;transform:scaleX(0.9);transform-origin:left top;-webkit-text-stroke:0.2px #2a2a2a;">14,50</div>
<div style="left:288.92px;top:585.76px;font-family:'Liberation Sans',sans-serif;font-size:14px;line-height:14px;color:#2a2a2a;white-space:pre;transform:scaleX(0.9);transform-origin:left top;-webkit-text-stroke:0.2px #2a2a2a;">15,00</div>
<div style="left:353.35px;top:585.76px;font-family:'Liberation Sans',sans-serif;font-size:14px;line-height:14px;color:#2a2a2a;white-space:pre;transform:scaleX(0.9);transform-origin:left top;-webkit-text-stroke:0.2px #2a2a2a;">15,50</div>
<div style="left:417.78px;top:585.76px;font-family:'Liberation Sans',sans-serif;font-size:14px;line-height:14px;color:#2a2a2a;white-space:pre;transform:scaleX(0.9);transform-origin:left top;-webkit-text-stroke:0.2px #2a2a2a;">16,00</div>
<div style="left:482.21px;top:585.76px;font-family:'Liberation Sans',sans-serif;font-size:14px;line-height:14px;color:#2a2a2a;white-space:pre;transform:scaleX(0.9);transform-origin:left top;-webkit-text-stroke:0.2px #2a2a2a;">16,50</div>
<div style="left:546.64px;top:585.76px;font-family:'Liberation Sans',sans-serif;font-size:14px;line-height:14px;color:#2a2a2a;white-space:pre;transform:scaleX(0.9);transform-origin:left top;-webkit-text-stroke:0.2px #2a2a2a;">17,00</div>
<div style="left:611.07px;top:585.76px;font-family:'Liberation Sans',sans-serif;font-size:14px;line-height:14px;color:#2a2a2a;white-space:pre;transform:scaleX(0.9);transform-origin:left top;-webkit-text-stroke:0.2px #2a2a2a;">17,50</div>
<div style="left:675.50px;top:585.76px;font-family:'Liberation Sans',sans-serif;font-size:14px;line-height:14px;color:#2a2a2a;white-space:pre;transform:scaleX(0.9);transform-origin:left top;-webkit-text-stroke:0.2px #2a2a2a;">18,00</div>
<div style="left:739.93px;top:585.76px;font-family:'Liberation Sans',sans-serif;font-size:14px;line-height:14px;color:#2a2a2a;white-space:pre;transform:scaleX(0.9);transform-origin:left top;-webkit-text-stroke:0.2px #2a2a2a;">18,50</div>
<div style="left:804.36px;top:585.76px;font-family:'Liberation Sans',sans-serif;font-size:14px;line-height:14px;color:#2a2a2a;white-space:pre;transform:scaleX(0.9);transform-origin:left top;-webkit-text-stroke:0.2px #2a2a2a;">19,00</div>
<div style="left:868.79px;top:585.76px;font-family:'Liberation Sans',sans-serif;font-size:14px;line-height:14px;color:#2a2a2a;white-space:pre;transform:scaleX(0.9);transform-origin:left top;-webkit-text-stroke:0.2px #2a2a2a;">19,50</div>
<div style="left:3.00px;top:673.00px;width:970.20px;height:32.20px;background:#525252;"></div>
<svg style="left:31px;top:683px" width="8" height="12"><path d="M6.3 1 L1.6 5.6 L6.3 10.2" stroke="#a0a0a0" stroke-width="1.6" fill="none"/></svg>
<svg style="left:64px;top:683px" width="8" height="12"><path d="M1.7 1 L6.4 5.6 L1.7 10.2" stroke="#a0a0a0" stroke-width="1.6" fill="none"/></svg>
<div style="left:119.30px;top:674.20px;width:90.00px;height:26.90px;background:#fff;border-radius:4px 0 6px 6px;"></div>
<div style="left:128.50px;top:682.80px;font-family:'Liberation Sans',sans-serif;font-size:13.1px;line-height:13.1px;color:#3a3a3a;white-space:pre;font-weight:bold;">Dashboard</div>
<div style="left:214.20px;top:668.00px;width:57.80px;height:33.10px;background:#fff;border-radius:0 0 6px 6px;"></div>
<div style="left:203.00px;top:674.20px;width:14.00px;height:6.00px;background:#fff;"></div>
<div style="left:205.70px;top:673.20px;width:8.50px;height:29.00px;background:#525252;border-radius:4px 4px 0 0;"></div>
<div style="left:209.20px;top:679.50px;width:1.50px;height:19.00px;background:#8c8c8c;border-radius:1px;"></div>
<div style="left:222.80px;top:679.68px;font-family:'Liberation Sans',sans-serif;font-size:12.6px;line-height:12.6px;color:#3a3a3a;white-space:pre;font-weight:bold;">Sheet1</div>
<div style="left:223.00px;top:695.80px;width:41.00px;height:2.20px;background:#1e7b4a;"></div>
<div style="left:268.00px;top:673.00px;width:8.00px;height:6.00px;background:#fff;"></div>
<div style="left:272.00px;top:673.00px;width:30.00px;height:29.00px;background:#525252;border-radius:4px 0 0 0;"></div>
<div style="left:275.30px;top:679.50px;width:1.50px;height:19.00px;background:#8c8c8c;border-radius:1px;"></div>
<svg style="left:319px;top:682.5px" width="12" height="12"><path d="M6 0.5 V11.5 M0.5 6 H11.5" stroke="#9c9c9c" stroke-width="1.2" fill="none"/></svg>
<div style="left:587.00px;top:685.30px;width:2.20px;height:2.20px;background:#d8d8d8;border-radius:1px;"></div>
<div style="left:587.00px;top:689.60px;width:2.20px;height:2.20px;background:#d8d8d8;border-radius:1px;"></div>
<div style="left:587.00px;top:693.90px;width:2.20px;height:2.20px;background:#d8d8d8;border-radius:1px;"></div>
<div style="left:605.20px;top:680.00px;width:347.80px;height:17.00px;background:#373737;border-radius:9px;"></div>
<svg style="left:609px;top:684.5px" width="8" height="9"><path d="M7.5 0 L7.5 8.5 L0 4.25 Z" fill="#c4c4c4"/></svg>
<div style="left:621.00px;top:684.00px;width:300.00px;height:9.30px;background:#c8c8c8;border-radius:5px;"></div>
<svg style="left:942px;top:684.5px" width="8" height="9"><path d="M0 0 L0 8.5 L7.5 4.25 Z" fill="#c4c4c4"/></svg>
<div style="left:953.80px;top:420.00px;width:15.70px;height:255.00px;background:#373737;border-radius:8px;"></div>
<svg style="left:957.5px;top:423.8px" width="10" height="8"><path d="M4.75 0 L9.5 7 L0 7 Z" fill="#c4c4c4"/></svg>
<div style="left:957.50px;top:435.80px;width:9.70px;height:115.50px;background:#c8c8c8;border-radius:5px;"></div>
<svg style="left:957.5px;top:664px" width="10" height="8"><path d="M0 0 L9.5 0 L4.75 7 Z" fill="#c4c4c4"/></svg>
<div style="left:3.00px;top:705.00px;width:970.20px;height:1.30px;background:#444444;"></div>
<div style="left:3.00px;top:706.00px;width:970.20px;height:19.60px;background:#515151;"></div>
<svg style="left:0px;top:718.60px" width="984" height="8"><path d="M2.5 1.5 L8 7 L2.5 7 Z" fill="#7a6040" opacity="0.8"/><path d="M973.2 1.5 L967.7 7 L973.2 7 Z" fill="#7a6040" opacity="0.8"/></svg>
<div style="left:15.30px;top:710.53px;font-family:'Liberation Sans',sans-serif;font-size:11.7px;line-height:11.7px;color:#dcdcdc;white-space:pre;font-weight:bold;transform:scaleX(0.9);transform-origin:left top;">Edit</div>
<svg style="left:64px;top:708px" width="17" height="17"><g stroke="#dcdcdc" stroke-width="1.35" fill="none" stroke-linecap="round" stroke-linejoin="round"><circle cx="7.4" cy="3.6" r="2"/><path d="M5.3 5.6 L2.2 4.6 Q1.2 5 1.8 6 L4.8 7.6 L4.8 10.2 L3.9 14.4 Q4.3 15.4 5.2 15 L7 11.2 M9.5 5.6 L12.6 4.6 Q13.6 5 13 6 L10 7.6 L9.8 9.6"/><path d="M9.4 10.6 L14.8 15.8 M14.8 10.6 L9.4 15.8"/></g></svg>
<div style="left:83.60px;top:710.53px;font-family:'Liberation Sans',sans-serif;font-size:11.7px;line-height:11.7px;color:#e6e6e6;white-space:pre;font-weight:bold;transform:scaleX(0.91);transform-origin:left top;">Accessibility: Investigate</div>
<svg style="left:672px;top:709px" width="15" height="14"><g stroke="#5e5e5e" stroke-width="1" fill="none"><rect x="0.5" y="0.5" width="14" height="13"/><path d="M5 0.5 V13.5 M10 0.5 V13.5 M0.5 4.8 H14.5 M0.5 9.2 H14.5"/></g></svg>
<svg style="left:713px;top:709px" width="15" height="14"><g stroke="#5e5e5e" stroke-width="1" fill="none"><rect x="0.5" y="0.5" width="14" height="13"/><rect x="3.5" y="2.5" width="8" height="9"/></g></svg>
<svg style="left:754px;top:709px" width="15" height="14"><g stroke="#5e5e5e" stroke-width="1" fill="none"><path d="M0.5 0.5 V13.5 H14.5 V0.5 M4.5 0.5 V8.5 H10.5 V0.5"/></g></svg>
<div style="left:787.00px;top:716.00px;width:7.00px;height:1.00px;background:#5e5e5e;"></div>
<div style="left:800.00px;top:716.00px;width:100.00px;height:1.50px;background:#9c9c9c;"></div>
<div style="left:849.30px;top:712.50px;width:1.50px;height:8.00px;background:#9c9c9c;"></div>
<svg style="left:905px;top:712.5px" width="8" height="8"><path d="M4 0 V8 M0 4 H8" stroke="#5e5e5e" stroke-width="1" fill="none"/></svg>
<div style="left:927.50px;top:710.53px;font-family:'Liberation Sans',sans-serif;font-size:11.7px;line-height:11.7px;color:#5e5e5e;white-space:pre;transform:scaleX(0.85);transform-origin:left top;">100%</div>
<div style="left:927.52px;top:601.40px;width:3.00px;height:3.00px;background:#2050a0;"></div>
<div style="left:221.60px;top:380.50px;width:285.90px;height:33.50px;box-sizing:border-box;border:3px solid #d20f0f;"></div>
<div style="left:501.00px;top:421.50px;width:177.50px;height:34.50px;box-sizing:border-box;background:#fff;border:1.5px solid #6a6a6a;"></div>
<div style="left:505.50px;top:424.98px;font-family:'Liberation Sans',sans-serif;font-size:12.6px;line-height:12.6px;color:#3a3a3a;white-space:pre;transform:scaleX(0.95);transform-origin:left top;">(<b>...</b>)</div>
<div style="left:524.50px;top:426.33px;font-family:'Liberation Sans',sans-serif;font-size:11.7px;line-height:11.7px;color:#222;white-space:pre;transform:scaleX(0.956);transform-origin:left top;">TRUE - Approximate match</div>
<div style="left:523.00px;top:440.90px;width:154.40px;height:14.70px;background:#0a6ccc;"></div>
<div style="left:505.50px;top:441.48px;font-family:'Liberation Sans',sans-serif;font-size:12.6px;line-height:12.6px;color:#3a3a3a;white-space:pre;transform:scaleX(0.95);transform-origin:left top;">(<b>...</b>)</div>
<div style="left:524.50px;top:443.53px;font-family:'Liberation Sans',sans-serif;font-size:11.7px;line-height:11.7px;color:#fff;white-space:pre;transform:scaleX(0.89);transform-origin:left top;">FALSE - Exact match</div>
<div style="left:497.50px;top:418.50px;width:183.50px;height:39.30px;box-sizing:border-box;border:2.5px solid #d20f0f;"></div>
<div style="left:682.00px;top:439.20px;width:219.80px;height:17.90px;box-sizing:border-box;background:#fcfcfc;border:1.3px solid #8a8a8a;border-radius:4px;"></div>
<div style="left:687.30px;top:439.75px;font-family:'Liberation Sans',sans-serif;font-size:12.8px;line-height:12.8px;color:#3c3c3c;white-space:pre;transform:scaleX(0.93);transform-origin:left top;">VLOOKUP will only find an exact match</div>
</div>
<div style="left:0;top:0;width:984px;height:370px;overflow:hidden">
<div style="left:3.00px;top:-20.00px;width:970.20px;height:389.20px;background:#4e4e4e;border-radius:0 0 8px 8px;"></div>
<div style="left:10.60px;top:-100.00px;width:954.00px;height:119.50px;background:#c6c6c6;border-bottom-left-radius:7px;border-bottom-right-radius:7px;box-shadow:0 1px 1.5px rgba(0,0,0,0.35);"></div>
<div style="left:23.80px;top:3.41px;font-family:'Liberation Sans',sans-serif;font-size:11.8px;line-height:11.8px;color:#2c2c2c;white-space:pre;transform:scaleX(0.975);transform-origin:left top;">Get &amp; Transform Data</div>
<div style="left:145.50px;top:3.41px;font-family:'Liberation Sans',sans-serif;font-size:11.8px;line-height:11.8px;color:#2c2c2c;white-space:pre;transform:scaleX(0.995);transform-origin:left top;">Queries &amp; Connections</div>
<div style="left:344.20px;top:3.41px;font-family:'Liberation Sans',sans-serif;font-size:11.8px;line-height:11.8px;color:#2c2c2c;white-space:pre;transform:scaleX(0.91);transform-origin:left top;">Data Types</div>
<div style="left:525.40px;top:3.41px;font-family:'Liberation Sans',sans-serif;font-size:11.8px;line-height:11.8px;color:#2c2c2c;white-space:pre;">Sort &amp; Filter</div>
<div style="left:738.80px;top:3.41px;font-family:'Liberation Sans',sans-serif;font-size:11.8px;line-height:11.8px;color:#2c2c2c;white-space:pre;transform:scaleX(0.94);transform-origin:left top;">Forecast</div>
<div style="left:140.20px;top:-5.00px;width:1.00px;height:19.00px;background:#8e8e8e;"></div>
<div style="left:267.50px;top:-5.00px;width:1.00px;height:19.00px;background:#8e8e8e;"></div>
<div style="left:472.50px;top:-5.00px;width:1.00px;height:19.00px;background:#8e8e8e;"></div>
<div style="left:638.80px;top:-5.00px;width:1.00px;height:19.00px;background:#8e8e8e;"></div>
<div style="left:696.00px;top:-5.00px;width:1.00px;height:19.00px;background:#8e8e8e;"></div>
<div style="left:823.20px;top:-5.00px;width:1.00px;height:19.00px;background:#8e8e8e;"></div>
<div style="left:880.40px;top:-5.00px;width:1.00px;height:19.00px;background:#8e8e8e;"></div>
<svg style="left:941.5px;top:6px" width="12" height="7"><path d="M1 6 L6 1.2 L11 6" stroke="#3a3a3a" stroke-width="1.4" fill="none"/></svg>
<div style="left:11.00px;top:28.00px;width:103.00px;height:26.00px;box-sizing:border-box;border:1.5px solid #7c7c7c;border-radius:5px;background:#4c4c4c;"></div>
<div style="left:17.60px;top:33.23px;font-family:'Liberation Sans',sans-serif;font-size:14.8px;line-height:14.8px;color:#e8e8e8;white-space:pre;transform:scaleX(0.82);transform-origin:left top;">C2</div>
<svg style="left:96px;top:38.5px" width="12" height="8"><path d="M1 1.2 L6 6.2 L11 1.2" stroke="#d8d8d8" stroke-width="1.4" fill="none"/></svg>
<div style="left:122.90px;top:35.60px;width:2.20px;height:2.20px;background:#dcdcdc;border-radius:1px;"></div>
<div style="left:122.90px;top:39.60px;width:2.20px;height:2.20px;background:#dcdcdc;border-radius:1px;"></div>
<div style="left:122.90px;top:43.60px;width:2.20px;height:2.20px;background:#dcdcdc;border-radius:1px;"></div>
<div style="left:134.00px;top:28.00px;width:84.50px;height:25.50px;box-sizing:border-box;border:1.3px solid #6e6e6e;border-radius:5px;"></div>
<svg style="left:140px;top:33.5px" width="15" height="15"><path d="M1 1 L13.5 13.5 M13.5 1 L1 13.5" stroke="#c44a55" stroke-width="1.5" fill="none"/></svg>
<svg style="left:162px;top:33.5px" width="18" height="14"><path d="M1 7 L6.5 12.5 L17 1.5" stroke="#4caa6e" stroke-width="1.6" fill="none"/></svg>
<div style="left:187.20px;top:30.70px;font-family:'Liberation Serif',serif;font-size:19px;line-height:19px;color:#dcdcdc;white-space:pre;font-style:italic;">fx</div>
<svg style="left:207.5px;top:37.5px" width="11" height="8"><path d="M1 1.2 L5.5 5.7 L10 1.2" stroke="#9a9a9a" stroke-width="1.2" fill="none"/></svg>
<div style="left:224.50px;top:28.40px;width:740.10px;height:25.20px;box-sizing:border-box;border:1.5px solid #7c7c7c;border-radius:5px;background:#4c4c4c;"></div>
<div style="left:236.00px;top:35.02px;font-family:'Liberation Mono',monospace;font-size:14.8px;line-height:14.8px;color:#ececec;white-space:pre;transform:scaleX(0.912);transform-origin:left top;">=VLOOKUP($B$4,Table1,Sheet1!$C$2</div>
<svg style="left:949px;top:36.5px" width="12" height="8"><path d="M1 1.2 L6 6.2 L11 1.2" stroke="#d8d8d8" stroke-width="1.4" fill="none"/></svg>
<div style="left:4.00px;top:60.50px;width:947.00px;height:20.20px;background:#535353;"></div>
<svg style="left:12px;top:64.5px" width="14" height="14"><path d="M13 0.5 L13 13 L0.5 13 Z" fill="#e8e8e8"/></svg>
<div style="left:28.40px;top:61.00px;width:1.20px;height:20.00px;background:#a0a0a0;"></div>
<div style="left:92.83px;top:61.00px;width:1.20px;height:20.00px;background:#a0a0a0;"></div>
<div style="left:157.26px;top:61.00px;width:1.20px;height:20.00px;background:#a0a0a0;"></div>
<div style="left:221.69px;top:61.00px;width:1.20px;height:20.00px;background:#a0a0a0;"></div>
<div style="left:286.12px;top:61.00px;width:1.20px;height:20.00px;background:#a0a0a0;"></div>
<div style="left:350.55px;top:61.00px;width:1.20px;height:20.00px;background:#a0a0a0;"></div>
<div style="left:414.98px;top:61.00px;width:1.20px;height:20.00px;background:#a0a0a0;"></div>
<div style="left:479.41px;top:61.00px;width:1.20px;height:20.00px;background:#a0a0a0;"></div>
<div style="left:543.84px;top:61.00px;width:1.20px;height:20.00px;background:#a0a0a0;"></div>
<div style="left:608.27px;top:61.00px;width:1.20px;height:20.00px;background:#a0a0a0;"></div>
<div style="left:672.70px;top:61.00px;width:1.20px;height:20.00px;background:#a0a0a0;"></div>
<div style="left:737.13px;top:61.00px;width:1.20px;height:20.00px;background:#a0a0a0;"></div>
<div style="left:801.56px;top:61.00px;width:1.20px;height:20.00px;background:#a0a0a0;"></div>
<div style="left:865.99px;top:61.00px;width:1.20px;height:20.00px;background:#a0a0a0;"></div>
<div style="left:930.42px;top:61.00px;width:1.20px;height:20.00px;background:#a0a0a0;"></div>
<div style="left:31.22px;top:63.72px;width:60px;text-align:center;font-family:'Liberation Sans',sans-serif;font-size:13px;line-height:13px;color:#dadada;white-space:pre;transform:scaleX(0.95);transform-origin:center top;">A</div>
<div style="left:95.65px;top:63.72px;width:60px;text-align:center;font-family:'Liberation Sans',sans-serif;font-size:13px;line-height:13px;color:#dadada;white-space:pre;transform:scaleX(0.95);transform-origin:center top;">B</div>
<div style="left:160.08px;top:63.72px;width:60px;text-align:center;font-family:'Liberation Sans',sans-serif;font-size:13px;line-height:13px;color:#dadada;white-space:pre;transform:scaleX(0.95);transform-origin:center top;">C</div>
<div style="left:224.51px;top:63.72px;width:60px;text-align:center;font-family:'Liberation Sans',sans-serif;font-size:13px;line-height:13px;color:#dadada;white-space:pre;transform:scaleX(0.95);transform-origin:center top;">D</div>
<div style="left:288.94px;top:63.72px;width:60px;text-align:center;font-family:'Liberation Sans',sans-serif;font-size:13px;line-height:13px;color:#dadada;white-space:pre;transform:scaleX(0.95);transform-origin:center top;">E</div>
<div style="left:353.37px;top:63.72px;width:60px;text-align:center;font-family:'Liberation Sans',sans-serif;font-size:13px;line-height:13px;color:#dadada;white-space:pre;transform:scaleX(0.95);transform-origin:center top;">F</div>
<div style="left:417.80px;top:63.72px;width:60px;text-align:center;font-family:'Liberation Sans',sans-serif;font-size:13px;line-height:13px;color:#dadada;white-space:pre;transform:scaleX(0.95);transform-origin:center top;">G</div>
<div style="left:482.23px;top:63.72px;width:60px;text-align:center;font-family:'Liberation Sans',sans-serif;font-size:13px;line-height:13px;color:#dadada;white-space:pre;transform:scaleX(0.95);transform-origin:center top;">H</div>
<div style="left:546.66px;top:63.72px;width:60px;text-align:center;font-family:'Liberation Sans',sans-serif;font-size:13px;line-height:13px;color:#dadada;white-space:pre;transform:scaleX(0.95);transform-origin:center top;">I</div>
<div style="left:611.09px;top:63.72px;width:60px;text-align:center;font-family:'Liberation Sans',sans-serif;font-size:13px;line-height:13px;color:#dadada;white-space:pre;transform:scaleX(0.95);transform-origin:center top;">J</div>
<div style="left:675.52px;top:63.72px;width:60px;text-align:center;font-family:'Liberation Sans',sans-serif;font-size:13px;line-height:13px;color:#dadada;white-space:pre;transform:scaleX(0.95);transform-origin:center top;">K</div>
<div style="left:739.95px;top:63.72px;width:60px;text-align:center;font-family:'Liberation Sans',sans-serif;font-size:13px;line-height:13px;color:#dadada;white-space:pre;transform:scaleX(0.95);transform-origin:center top;">L</div>
<div style="left:804.38px;top:63.72px;width:60px;text-align:center;font-family:'Liberation Sans',sans-serif;font-size:13px;line-height:13px;color:#dadada;white-space:pre;transform:scaleX(0.95);transform-origin:center top;">M</div>
<div style="left:868.81px;top:63.72px;width:60px;text-align:center;font-family:'Liberation Sans',sans-serif;font-size:13px;line-height:13px;color:#dadada;white-space:pre;transform:scaleX(0.95);transform-origin:center top;">N</div>
<div style="left:29.00px;top:80.70px;width:922.00px;height:234.30px;background:#fff;"></div>
<div style="left:4.00px;top:80.70px;width:24.60px;height:234.30px;background:#525252;"></div>
<div style="left:4.00px;top:100.20px;width:24.60px;height:1.40px;background:#a8a8a8;"></div>
<div style="left:4.00px;top:120.40px;width:24.60px;height:1.40px;background:#a8a8a8;"></div>
<div style="left:4.00px;top:140.50px;width:24.60px;height:1.40px;background:#a8a8a8;"></div>
<div style="left:4.00px;top:162.20px;width:24.60px;height:1.40px;background:#a8a8a8;"></div>
<div style="left:4.00px;top:182.90px;width:24.60px;height:1.40px;background:#a8a8a8;"></div>
<div style="left:4.00px;top:204.00px;width:24.60px;height:1.40px;background:#a8a8a8;"></div>
<div style="left:4.00px;top:224.90px;width:24.60px;height:1.40px;background:#a8a8a8;"></div>
<div style="left:4.00px;top:246.20px;width:24.60px;height:1.40px;background:#a8a8a8;"></div>
<div style="left:4.00px;top:266.60px;width:24.60px;height:1.40px;background:#a8a8a8;"></div>
<div style="left:4.00px;top:286.90px;width:24.60px;height:1.40px;background:#a8a8a8;"></div>
<div style="left:4.00px;top:307.10px;width:24.60px;height:1.40px;background:#a8a8a8;"></div>
<div style="left:4.20px;top:84.57px;width:24px;text-align:center;font-family:'Liberation Sans',sans-serif;font-size:13.3px;line-height:13.3px;color:#dadada;white-space:pre;transform:scaleX(0.95);transform-origin:center top;">1</div>
<div style="left:4.20px;top:104.77px;width:24px;text-align:center;font-family:'Liberation Sans',sans-serif;font-size:13.3px;line-height:13.3px;color:#dadada;white-space:pre;transform:scaleX(0.95);transform-origin:center top;">2</div>
<div style="left:4.20px;top:124.97px;width:24px;text-align:center;font-family:'Liberation Sans',sans-serif;font-size:13.3px;line-height:13.3px;color:#dadada;white-space:pre;transform:scaleX(0.95);transform-origin:center top;">3</div>
<div style="left:4.20px;top:145.07px;width:24px;text-align:center;font-family:'Liberation Sans',sans-serif;font-size:13.3px;line-height:13.3px;color:#dadada;white-space:pre;transform:scaleX(0.95);transform-origin:center top;">4</div>
<div style="left:4.20px;top:166.77px;width:24px;text-align:center;font-family:'Liberation Sans',sans-serif;font-size:13.3px;line-height:13.3px;color:#dadada;white-space:pre;transform:scaleX(0.95);transform-origin:center top;">5</div>
<div style="left:4.20px;top:187.47px;width:24px;text-align:center;font-family:'Liberation Sans',sans-serif;font-size:13.3px;line-height:13.3px;color:#dadada;white-space:pre;transform:scaleX(0.95);transform-origin:center top;">6</div>
<div style="left:4.20px;top:208.57px;width:24px;text-align:center;font-family:'Liberation Sans',sans-serif;font-size:13.3px;line-height:13.3px;color:#dadada;white-space:pre;transform:scaleX(0.95);transform-origin:center top;">7</div>
<div style="left:4.20px;top:229.47px;width:24px;text-align:center;font-family:'Liberation Sans',sans-serif;font-size:13.3px;line-height:13.3px;color:#dadada;white-space:pre;transform:scaleX(0.95);transform-origin:center top;">8</div>
<div style="left:4.20px;top:250.77px;width:24px;text-align:center;font-family:'Liberation Sans',sans-serif;font-size:13.3px;line-height:13.3px;color:#dadada;white-space:pre;transform:scaleX(0.95);transform-origin:center top;">9</div>
<div style="left:4.20px;top:271.17px;width:24px;text-align:center;font-family:'Liberation Sans',sans-serif;font-size:13.3px;line-height:13.3px;color:#dadada;white-space:pre;transform:scaleX(0.95);transform-origin:center top;">10</div>
<div style="left:4.20px;top:291.47px;width:24px;text-align:center;font-family:'Liberation Sans',sans-serif;font-size:13.3px;line-height:13.3px;color:#dadada;white-space:pre;transform:scaleX(0.95);transform-origin:center top;">11</div>
<div style="left:4.20px;top:311.67px;width:24px;text-align:center;font-family:'Liberation Sans',sans-serif;font-size:13.3px;line-height:13.3px;color:#dadada;white-space:pre;transform:scaleX(0.95);transform-origin:center top;">12</div>
<div style="left:4.00px;top:80.20px;width:947.00px;height:1.00px;background:#9a9a9a;"></div>
<div style="left:92.93px;top:80.70px;width:1.00px;height:234.30px;background:#e1e1e1;"></div>
<div style="left:157.36px;top:80.70px;width:1.00px;height:234.30px;background:#e1e1e1;"></div>
<div style="left:221.79px;top:80.70px;width:1.00px;height:234.30px;background:#e1e1e1;"></div>
<div style="left:286.22px;top:80.70px;width:1.00px;height:234.30px;background:#e1e1e1;"></div>
<div style="left:350.65px;top:80.70px;width:1.00px;height:234.30px;background:#e1e1e1;"></div>
<div style="left:415.08px;top:80.70px;width:1.00px;height:234.30px;background:#e1e1e1;"></div>
<div style="left:479.51px;top:80.70px;width:1.00px;height:234.30px;background:#e1e1e1;"></div>
<div style="left:543.94px;top:80.70px;width:1.00px;height:234.30px;background:#e1e1e1;"></div>
<div style="left:608.37px;top:80.70px;width:1.00px;height:234.30px;background:#e1e1e1;"></div>
<div style="left:672.80px;top:80.70px;width:1.00px;height:234.30px;background:#e1e1e1;"></div>
<div style="left:737.23px;top:80.70px;width:1.00px;height:234.30px;background:#e1e1e1;"></div>
<div style="left:801.66px;top:80.70px;width:1.00px;height:234.30px;background:#e1e1e1;"></div>
<div style="left:866.09px;top:80.70px;width:1.00px;height:234.30px;background:#e1e1e1;"></div>
<div style="left:930.52px;top:80.70px;width:1.00px;height:234.30px;background:#e1e1e1;"></div>
<div style="left:29.00px;top:100.40px;width:922.00px;height:1.00px;background:#e1e1e1;"></div>
<div style="left:29.00px;top:120.60px;width:922.00px;height:1.00px;background:#e1e1e1;"></div>
<div style="left:29.00px;top:140.70px;width:922.00px;height:1.00px;background:#e1e1e1;"></div>
<div style="left:29.00px;top:162.40px;width:922.00px;height:1.00px;background:#e1e1e1;"></div>
<div style="left:29.00px;top:183.10px;width:922.00px;height:1.00px;background:#e1e1e1;"></div>
<div style="left:29.00px;top:204.20px;width:922.00px;height:1.00px;background:#e1e1e1;"></div>
<div style="left:29.00px;top:225.10px;width:922.00px;height:1.00px;background:#e1e1e1;"></div>
<div style="left:29.00px;top:246.40px;width:922.00px;height:1.00px;background:#e1e1e1;"></div>
<div style="left:29.00px;top:266.80px;width:922.00px;height:1.00px;background:#e1e1e1;"></div>
<div style="left:29.00px;top:287.10px;width:922.00px;height:1.00px;background:#e1e1e1;"></div>
<div style="left:29.00px;top:307.30px;width:922.00px;height:1.00px;background:#e1e1e1;"></div>
<div style="left:95.26px;top:104.26px;width:60px;text-align:right;font-family:'Liberation Sans',sans-serif;font-size:14px;line-height:14px;color:#2a2a2a;white-space:pre;transform:scaleX(0.92);transform-origin:right top;">1</div>
<div style="left:159.69px;top:104.26px;width:60px;text-align:right;font-family:'Liberation Sans',sans-serif;font-size:14px;line-height:14px;color:#2a2a2a;white-space:pre;transform:scaleX(0.92);transform-origin:right top;">2</div>
<div style="left:224.12px;top:104.26px;width:60px;text-align:right;font-family:'Liberation Sans',sans-serif;font-size:14px;line-height:14px;color:#2a2a2a;white-space:pre;transform:scaleX(0.92);transform-origin:right top;">3</div>
<div style="left:288.55px;top:104.26px;width:60px;text-align:right;font-family:'Liberation Sans',sans-serif;font-size:14px;line-height:14px;color:#2a2a2a;white-space:pre;transform:scaleX(0.92);transform-origin:right top;">4</div>
<div style="left:352.98px;top:104.26px;width:60px;text-align:right;font-family:'Liberation Sans',sans-serif;font-size:14px;line-height:14px;color:#2a2a2a;white-space:pre;transform:scaleX(0.92);transform-origin:right top;">5</div>
<div style="left:417.41px;top:104.26px;width:60px;text-align:right;font-family:'Liberation Sans',sans-serif;font-size:14px;line-height:14px;color:#2a2a2a;white-space:pre;transform:scaleX(0.92);transform-origin:right top;">6</div>
<div style="left:481.84px;top:104.26px;width:60px;text-align:right;font-family:'Liberation Sans',sans-serif;font-size:14px;line-height:14px;color:#2a2a2a;white-space:pre;transform:scaleX(0.92);transform-origin:right top;">7</div>
<div style="left:546.27px;top:104.26px;width:60px;text-align:right;font-family:'Liberation Sans',sans-serif;font-size:14px;line-height:14px;color:#2a2a2a;white-space:pre;transform:scaleX(0.92);transform-origin:right top;">8</div>
<div style="left:610.70px;top:104.26px;width:60px;text-align:right;font-family:'Liberation Sans',sans-serif;font-size:14px;line-height:14px;color:#2a2a2a;white-space:pre;transform:scaleX(0.92);transform-origin:right top;">9</div>
<div style="left:675.13px;top:104.26px;width:60px;text-align:right;font-family:'Liberation Sans',sans-serif;font-size:14px;line-height:14px;color:#2a2a2a;white-space:pre;transform:scaleX(0.92);transform-origin:right top;">10</div>
<div style="left:739.56px;top:104.26px;width:60px;text-align:right;font-family:'Liberation Sans',sans-serif;font-size:14px;line-height:14px;color:#2a2a2a;white-space:pre;transform:scaleX(0.92);transform-origin:right top;">11</div>
<div style="left:803.99px;top:104.26px;width:60px;text-align:right;font-family:'Liberation Sans',sans-serif;font-size:14px;line-height:14px;color:#2a2a2a;white-space:pre;transform:scaleX(0.92);transform-origin:right top;">12</div>
<div style="left:868.42px;top:104.26px;width:60px;text-align:right;font-family:'Liberation Sans',sans-serif;font-size:14px;line-height:14px;color:#2a2a2a;white-space:pre;transform:scaleX(0.92);transform-origin:right top;">13</div>
<div style="left:94.03px;top:121.30px;width:63.23px;height:19.90px;background:#000;"></div>
<div style="left:96.43px;top:123.52px;font-family:'Liberation Sans',sans-serif;font-size:13.6px;line-height:13.6px;color:#ffffff;white-space:pre;font-weight:bold;transform:scaleX(0.94);transform-origin:left top;">Ano</div>
<div style="left:141.06px;top:123.70px;width:16.20px;height:17.50px;background:#f2f2f2;"></div>
<svg style="left:145.46px;top:130.60px" width="8" height="5"><path d="M0 0.2 L7 0.2 L3.5 4 Z" fill="#5c5c5c"/></svg>
<div style="left:158.46px;top:121.30px;width:63.23px;height:19.90px;background:#000;"></div>
<div style="left:160.86px;top:123.52px;font-family:'Liberation Sans',sans-serif;font-size:13.6px;line-height:13.6px;color:#ffffff;white-space:pre;font-weight:bold;transform:scaleX(0.94);transform-origin:left top;">Jan</div>
<div style="left:205.49px;top:123.70px;width:16.20px;height:17.50px;background:#f2f2f2;"></div>
<svg style="left:209.89px;top:130.60px" width="8" height="5"><path d="M0 0.2 L7 0.2 L3.5 4 Z" fill="#5c5c5c"/></svg>
<div style="left:222.89px;top:121.30px;width:63.23px;height:19.90px;background:#000;"></div>
<div style="left:225.29px;top:123.52px;font-family:'Liberation Sans',sans-serif;font-size:13.6px;line-height:13.6px;color:#ffffff;white-space:pre;font-weight:bold;transform:scaleX(0.94);transform-origin:left top;">Fev</div>
<div style="left:269.92px;top:123.70px;width:16.20px;height:17.50px;background:#f2f2f2;"></div>
<svg style="left:274.32px;top:130.60px" width="8" height="5"><path d="M0 0.2 L7 0.2 L3.5 4 Z" fill="#5c5c5c"/></svg>
<div style="left:287.32px;top:121.30px;width:63.23px;height:19.90px;background:#000;"></div>
<div style="left:289.72px;top:123.52px;font-family:'Liberation Sans',sans-serif;font-size:13.6px;line-height:13.6px;color:#ffffff;white-space:pre;font-weight:bold;transform:scaleX(0.94);transform-origin:left top;">Mar</div>
<div style="left:334.35px;top:123.70px;width:16.20px;height:17.50px;background:#f2f2f2;"></div>
<svg style="left:338.75px;top:130.60px" width="8" height="5"><path d="M0 0.2 L7 0.2 L3.5 4 Z" fill="#5c5c5c"/></svg>
<div style="left:351.75px;top:121.30px;width:63.23px;height:19.90px;background:#000;"></div>
<div style="left:354.15px;top:123.52px;font-family:'Liberation Sans',sans-serif;font-size:13.6px;line-height:13.6px;color:#ffffff;white-space:pre;font-weight:bold;transform:scaleX(0.94);transform-origin:left top;">Abr</div>
<div style="left:398.78px;top:123.70px;width:16.20px;height:17.50px;background:#f2f2f2;"></div>
<svg style="left:403.18px;top:130.60px" width="8" height="5"><path d="M0 0.2 L7 0.2 L3.5 4 Z" fill="#5c5c5c"/></svg>
<div style="left:416.18px;top:121.30px;width:63.23px;height:19.90px;background:#000;"></div>
<div style="left:418.58px;top:123.52px;font-family:'Liberation Sans',sans-serif;font-size:13.6px;line-height:13.6px;color:#ffffff;white-space:pre;font-weight:bold;transform:scaleX(0.94);transform-origin:left top;">Mai</div>
<div style="left:463.21px;top:123.70px;width:16.20px;height:17.50px;background:#f2f2f2;"></div>
<svg style="left:467.61px;top:130.60px" width="8" height="5"><path d="M0 0.2 L7 0.2 L3.5 4 Z" fill="#5c5c5c"/></svg>
<div style="left:480.61px;top:121.30px;width:63.23px;height:19.90px;background:#000;"></div>
<div style="left:483.01px;top:123.52px;font-family:'Liberation Sans',sans-serif;font-size:13.6px;line-height:13.6px;color:#ffffff;white-space:pre;font-weight:bold;transform:scaleX(0.94);transform-origin:left top;">Jun</div>
<div style="left:527.64px;top:123.70px;width:16.20px;height:17.50px;background:#f2f2f2;"></div>
<svg style="left:532.04px;top:130.60px" width="8" height="5"><path d="M0 0.2 L7 0.2 L3.5 4 Z" fill="#5c5c5c"/></svg>
<div style="left:545.04px;top:121.30px;width:63.23px;height:19.90px;background:#000;"></div>
<div style="left:547.44px;top:123.52px;font-family:'Liberation Sans',sans-serif;font-size:13.6px;line-height:13.6px;color:#ffffff;white-space:pre;font-weight:bold;transform:scaleX(0.94);transform-origin:left top;">Jul</div>
<div style="left:592.07px;top:123.70px;width:16.20px;height:17.50px;background:#f2f2f2;"></div>
<svg style="left:596.47px;top:130.60px" width="8" height="5"><path d="M0 0.2 L7 0.2 L3.5 4 Z" fill="#5c5c5c"/></svg>
<div style="left:609.47px;top:121.30px;width:63.23px;height:19.90px;background:#000;"></div>
<div style="left:611.87px;top:123.52px;font-family:'Liberation Sans',sans-serif;font-size:13.6px;line-height:13.6px;color:#ffffff;white-space:pre;font-weight:bold;transform:scaleX(0.94);transform-origin:left top;">Ago</div>
<div style="left:656.50px;top:123.70px;width:16.20px;height:17.50px;background:#f2f2f2;"></div>
<svg style="left:660.90px;top:130.60px" width="8" height="5"><path d="M0 0.2 L7 0.2 L3.5 4 Z" fill="#5c5c5c"/></svg>
<div style="left:673.90px;top:121.30px;width:63.23px;height:19.90px;background:#000;"></div>
<div style="left:676.30px;top:123.52px;font-family:'Liberation Sans',sans-serif;font-size:13.6px;line-height:13.6px;color:#ffffff;white-space:pre;font-weight:bold;transform:scaleX(0.94);transform-origin:left top;">Set</div>
<div style="left:720.93px;top:123.70px;width:16.20px;height:17.50px;background:#f2f2f2;"></div>
<svg style="left:725.33px;top:130.60px" width="8" height="5"><path d="M0 0.2 L7 0.2 L3.5 4 Z" fill="#5c5c5c"/></svg>
<div style="left:738.33px;top:121.30px;width:63.23px;height:19.90px;background:#000;"></div>
<div style="left:740.73px;top:123.52px;font-family:'Liberation Sans',sans-serif;font-size:13.6px;line-height:13.6px;color:#ffffff;white-space:pre;font-weight:bold;transform:scaleX(0.94);transform-origin:left top;">Out</div>
<div style="left:785.36px;top:123.70px;width:16.20px;height:17.50px;background:#f2f2f2;"></div>
<svg style="left:789.76px;top:130.60px" width="8" height="5"><path d="M0 0.2 L7 0.2 L3.5 4 Z" fill="#5c5c5c"/></svg>
<div style="left:802.76px;top:121.30px;width:63.23px;height:19.90px;background:#000;"></div>
<div style="left:805.16px;top:123.52px;font-family:'Liberation Sans',sans-serif;font-size:13.6px;line-height:13.6px;color:#ffffff;white-space:pre;font-weight:bold;transform:scaleX(0.94);transform-origin:left top;">Nov</div>
<div style="left:849.79px;top:123.70px;width:16.20px;height:17.50px;background:#f2f2f2;"></div>
<svg style="left:854.19px;top:130.60px" width="8" height="5"><path d="M0 0.2 L7 0.2 L3.5 4 Z" fill="#5c5c5c"/></svg>
<div style="left:867.19px;top:121.30px;width:63.23px;height:19.90px;background:#000;"></div>
<div style="left:869.59px;top:123.52px;font-family:'Liberation Sans',sans-serif;font-size:13.6px;line-height:13.6px;color:#ffffff;white-space:pre;font-weight:bold;transform:scaleX(0.94);transform-origin:left top;">Dez</div>
<div style="left:914.22px;top:123.70px;width:16.20px;height:17.50px;background:#f2f2f2;"></div>
<svg style="left:918.62px;top:130.60px" width="8" height="5"><path d="M0 0.2 L7 0.2 L3.5 4 Z" fill="#5c5c5c"/></svg>
<div style="left:93.43px;top:141.20px;width:837.59px;height:21.70px;background:#cbced6;"></div>
<div style="left:92.73px;top:141.20px;width:1.40px;height:21.70px;background:#c4c8d0;"></div>
<div style="left:157.16px;top:141.20px;width:1.40px;height:21.70px;background:#c4c8d0;"></div>
<div style="left:221.59px;top:141.20px;width:1.40px;height:21.70px;background:#c4c8d0;"></div>
<div style="left:286.02px;top:141.20px;width:1.40px;height:21.70px;background:#c4c8d0;"></div>
<div style="left:350.45px;top:141.20px;width:1.40px;height:21.70px;background:#c4c8d0;"></div>
<div style="left:414.88px;top:141.20px;width:1.40px;height:21.70px;background:#c4c8d0;"></div>
<div style="left:479.31px;top:141.20px;width:1.40px;height:21.70px;background:#c4c8d0;"></div>
<div style="left:543.74px;top:141.20px;width:1.40px;height:21.70px;background:#c4c8d0;"></div>
<div style="left:608.17px;top:141.20px;width:1.40px;height:21.70px;background:#c4c8d0;"></div>
<div style="left:672.60px;top:141.20px;width:1.40px;height:21.70px;background:#c4c8d0;"></div>
<div style="left:737.03px;top:141.20px;width:1.40px;height:21.70px;background:#c4c8d0;"></div>
<div style="left:801.46px;top:141.20px;width:1.40px;height:21.70px;background:#c4c8d0;"></div>
<div style="left:865.89px;top:141.20px;width:1.40px;height:21.70px;background:#c4c8d0;"></div>
<div style="left:930.32px;top:141.20px;width:1.40px;height:21.70px;background:#c4c8d0;"></div>
<div style="left:93.43px;top:162.40px;width:837.59px;height:1.00px;background:#c4c8d0;"></div>
<div style="left:95.26px;top:143.36px;width:60px;text-align:right;font-family:'Liberation Sans',sans-serif;font-size:14px;line-height:14px;color:#2a2a2a;white-space:pre;transform:scaleX(0.9);transform-origin:right top;-webkit-text-stroke:0.2px #2a2a2a;">2020</div>
<div style="left:160.06px;top:143.36px;font-family:'Liberation Sans',sans-serif;font-size:14px;line-height:14px;color:#2a2a2a;white-space:pre;transform:scaleX(0.9);transform-origin:left top;-webkit-text-stroke:0.2px #2a2a2a;">17,45</div>
<div style="left:224.49px;top:143.36px;font-family:'Liberation Sans',sans-serif;font-size:14px;line-height:14px;color:#2a2a2a;white-space:pre;transform:scaleX(0.9);transform-origin:left top;-webkit-text-stroke:0.2px #2a2a2a;">15,20</div>
<div style="left:288.92px;top:143.36px;font-family:'Liberation Sans',sans-serif;font-size:14px;line-height:14px;color:#2a2a2a;white-space:pre;transform:scaleX(0.9);transform-origin:left top;-webkit-text-stroke:0.2px #2a2a2a;">11,50</div>
<div style="left:353.35px;top:143.36px;font-family:'Liberation Sans',sans-serif;font-size:14px;line-height:14px;color:#2a2a2a;white-space:pre;transform:scaleX(0.9);transform-origin:left top;-webkit-text-stroke:0.2px #2a2a2a;">13,20</div>
<div style="left:417.78px;top:143.36px;font-family:'Liberation Sans',sans-serif;font-size:14px;line-height:14px;color:#2a2a2a;white-space:pre;transform:scaleX(0.9);transform-origin:left top;-webkit-text-stroke:0.2px #2a2a2a;">14,80</div>
<div style="left:482.21px;top:143.36px;font-family:'Liberation Sans',sans-serif;font-size:14px;line-height:14px;color:#2a2a2a;white-space:pre;transform:scaleX(0.9);transform-origin:left top;-webkit-text-stroke:0.2px #2a2a2a;">16,50</div>
<div style="left:546.64px;top:143.36px;font-family:'Liberation Sans',sans-serif;font-size:14px;line-height:14px;color:#2a2a2a;white-space:pre;transform:scaleX(0.9);transform-origin:left top;-webkit-text-stroke:0.2px #2a2a2a;">18,00</div>
<div style="left:611.07px;top:143.36px;font-family:'Liberation Sans',sans-serif;font-size:14px;line-height:14px;color:#2a2a2a;white-space:pre;transform:scaleX(0.9);transform-origin:left top;-webkit-text-stroke:0.2px #2a2a2a;">17,50</div>
<div style="left:675.50px;top:143.36px;font-family:'Liberation Sans',sans-serif;font-size:14px;line-height:14px;color:#2a2a2a;white-space:pre;transform:scaleX(0.9);transform-origin:left top;-webkit-text-stroke:0.2px #2a2a2a;">16,00</div>
<div style="left:739.93px;top:143.36px;font-family:'Liberation Sans',sans-serif;font-size:14px;line-height:14px;color:#2a2a2a;white-space:pre;transform:scaleX(0.9);transform-origin:left top;-webkit-text-stroke:0.2px #2a2a2a;">14,50</div>
<div style="left:804.36px;top:143.36px;font-family:'Liberation Sans',sans-serif;font-size:14px;line-height:14px;color:#2a2a2a;white-space:pre;transform:scaleX(0.9);transform-origin:left top;-webkit-text-stroke:0.2px #2a2a2a;">16,20</div>
<div style="left:868.79px;top:143.36px;font-family:'Liberation Sans',sans-serif;font-size:14px;line-height:14px;color:#2a2a2a;white-space:pre;transform:scaleX(0.9);transform-origin:left top;-webkit-text-stroke:0.2px #2a2a2a;">17,80</div>
<div style="left:93.43px;top:162.90px;width:837.59px;height:20.70px;background:#e9ecf5;"></div>
<div style="left:92.73px;top:162.90px;width:1.40px;height:20.70px;background:#c4c8d0;"></div>
<div style="left:157.16px;top:162.90px;width:1.40px;height:20.70px;background:#c4c8d0;"></div>
<div style="left:221.59px;top:162.90px;width:1.40px;height:20.70px;background:#c4c8d0;"></div>
<div style="left:286.02px;top:162.90px;width:1.40px;height:20.70px;background:#c4c8d0;"></div>
<div style="left:350.45px;top:162.90px;width:1.40px;height:20.70px;background:#c4c8d0;"></div>
<div style="left:414.88px;top:162.90px;width:1.40px;height:20.70px;background:#c4c8d0;"></div>
<div style="left:479.31px;top:162.90px;width:1.40px;height:20.70px;background:#c4c8d0;"></div>
<div style="left:543.74px;top:162.90px;width:1.40px;height:20.70px;background:#c4c8d0;"></div>
<div style="left:608.17px;top:162.90px;width:1.40px;height:20.70px;background:#c4c8d0;"></div>
<div style="left:672.60px;top:162.90px;width:1.40px;height:20.70px;background:#c4c8d0;"></div>
<div style="left:737.03px;top:162.90px;width:1.40px;height:20.70px;background:#c4c8d0;"></div>
<div style="left:801.46px;top:162.90px;width:1.40px;height:20.70px;background:#c4c8d0;"></div>
<div style="left:865.89px;top:162.90px;width:1.40px;height:20.70px;background:#c4c8d0;"></div>
<div style="left:930.32px;top:162.90px;width:1.40px;height:20.70px;background:#c4c8d0;"></div>
<div style="left:93.43px;top:183.10px;width:837.59px;height:1.00px;background:#c4c8d0;"></div>
<div style="left:95.26px;top:165.06px;width:60px;text-align:right;font-family:'Liberation Sans',sans-serif;font-size:14px;line-height:14px;color:#2a2a2a;white-space:pre;transform:scaleX(0.9);transform-origin:right top;-webkit-text-stroke:0.2px #2a2a2a;">2021</div>
<div style="left:160.06px;top:165.06px;font-family:'Liberation Sans',sans-serif;font-size:14px;line-height:14px;color:#2a2a2a;white-space:pre;transform:scaleX(0.9);transform-origin:left top;-webkit-text-stroke:0.2px #2a2a2a;">17,00</div>
<div style="left:224.49px;top:165.06px;font-family:'Liberation Sans',sans-serif;font-size:14px;line-height:14px;color:#2a2a2a;white-space:pre;transform:scaleX(0.9);transform-origin:left top;-webkit-text-stroke:0.2px #2a2a2a;">16,50</div>
<div style="left:288.92px;top:165.06px;font-family:'Liberation Sans',sans-serif;font-size:14px;line-height:14px;color:#2a2a2a;white-space:pre;transform:scaleX(0.9);transform-origin:left top;-webkit-text-stroke:0.2px #2a2a2a;">16,00</div>
<div style="left:353.35px;top:165.06px;font-family:'Liberation Sans',sans-serif;font-size:14px;line-height:14px;color:#2a2a2a;white-space:pre;transform:scaleX(0.9);transform-origin:left top;-webkit-text-stroke:0.2px #2a2a2a;">15,50</div>
<div style="left:417.78px;top:165.06px;font-family:'Liberation Sans',sans-serif;font-size:14px;line-height:14px;color:#2a2a2a;white-space:pre;transform:scaleX(0.9);transform-origin:left top;-webkit-text-stroke:0.2px #2a2a2a;">16,00</div>
<div style="left:482.21px;top:165.06px;font-family:'Liberation Sans',sans-serif;font-size:14px;line-height:14px;color:#2a2a2a;white-space:pre;transform:scaleX(0.9);transform-origin:left top;-webkit-text-stroke:0.2px #2a2a2a;">16,50</div>
<div style="left:546.64px;top:165.06px;font-family:'Liberation Sans',sans-serif;font-size:14px;line-height:14px;color:#2a2a2a;white-space:pre;transform:scaleX(0.9);transform-origin:left top;-webkit-text-stroke:0.2px #2a2a2a;">15,80</div>
<div style="left:611.07px;top:165.06px;font-family:'Liberation Sans',sans-serif;font-size:14px;line-height:14px;color:#2a2a2a;white-space:pre;transform:scaleX(0.9);transform-origin:left top;-webkit-text-stroke:0.2px #2a2a2a;">15,20</div>
<div style="left:675.50px;top:165.06px;font-family:'Liberation Sans',sans-serif;font-size:14px;line-height:14px;color:#2a2a2a;white-space:pre;transform:scaleX(0.9);transform-origin:left top;-webkit-text-stroke:0.2px #2a2a2a;">14,50</div>
<div style="left:739.93px;top:165.06px;font-family:'Liberation Sans',sans-serif;font-size:14px;line-height:14px;color:#2a2a2a;white-space:pre;transform:scaleX(0.9);transform-origin:left top;-webkit-text-stroke:0.2px #2a2a2a;">13,80</div>
<div style="left:804.36px;top:165.06px;font-family:'Liberation Sans',sans-serif;font-size:14px;line-height:14px;color:#2a2a2a;white-space:pre;transform:scaleX(0.9);transform-origin:left top;-webkit-text-stroke:0.2px #2a2a2a;">13,20</div>
<div style="left:868.79px;top:165.06px;font-family:'Liberation Sans',sans-serif;font-size:14px;line-height:14px;color:#2a2a2a;white-space:pre;transform:scaleX(0.9);transform-origin:left top;-webkit-text-stroke:0.2px #2a2a2a;">13,50</div>
<div style="left:93.43px;top:183.60px;width:837.59px;height:21.10px;background:#cbced6;"></div>
<div style="left:92.73px;top:183.60px;width:1.40px;height:21.10px;background:#c4c8d0;"></div>
<div style="left:157.16px;top:183.60px;width:1.40px;height:21.10px;background:#c4c8d0;"></div>
<div style="left:221.59px;top:183.60px;width:1.40px;height:21.10px;background:#c4c8d0;"></div>
<div style="left:286.02px;top:183.60px;width:1.40px;height:21.10px;background:#c4c8d0;"></div>
<div style="left:350.45px;top:183.60px;width:1.40px;height:21.10px;background:#c4c8d0;"></div>
<div style="left:414.88px;top:183.60px;width:1.40px;height:21.10px;background:#c4c8d0;"></div>
<div style="left:479.31px;top:183.60px;width:1.40px;height:21.10px;background:#c4c8d0;"></div>
<div style="left:543.74px;top:183.60px;width:1.40px;height:21.10px;background:#c4c8d0;"></div>
<div style="left:608.17px;top:183.60px;width:1.40px;height:21.10px;background:#c4c8d0;"></div>
<div style="left:672.60px;top:183.60px;width:1.40px;height:21.10px;background:#c4c8d0;"></div>
<div style="left:737.03px;top:183.60px;width:1.40px;height:21.10px;background:#c4c8d0;"></div>
<div style="left:801.46px;top:183.60px;width:1.40px;height:21.10px;background:#c4c8d0;"></div>
<div style="left:865.89px;top:183.60px;width:1.40px;height:21.10px;background:#c4c8d0;"></div>
<div style="left:930.32px;top:183.60px;width:1.40px;height:21.10px;background:#c4c8d0;"></div>
<div style="left:93.43px;top:204.20px;width:837.59px;height:1.00px;background:#c4c8d0;"></div>
<div style="left:95.26px;top:185.76px;width:60px;text-align:right;font-family:'Liberation Sans',sans-serif;font-size:14px;line-height:14px;color:#2a2a2a;white-space:pre;transform:scaleX(0.9);transform-origin:right top;-webkit-text-stroke:0.2px #2a2a2a;">2022</div>
<div style="left:160.06px;top:185.76px;font-family:'Liberation Sans',sans-serif;font-size:14px;line-height:14px;color:#2a2a2a;white-space:pre;transform:scaleX(0.9);transform-origin:left top;-webkit-text-stroke:0.2px #2a2a2a;">13,00</div>
<div style="left:224.49px;top:185.76px;font-family:'Liberation Sans',sans-serif;font-size:14px;line-height:14px;color:#2a2a2a;white-space:pre;transform:scaleX(0.9);transform-origin:left top;-webkit-text-stroke:0.2px #2a2a2a;">13,50</div>
<div style="left:288.92px;top:185.76px;font-family:'Liberation Sans',sans-serif;font-size:14px;line-height:14px;color:#2a2a2a;white-space:pre;transform:scaleX(0.9);transform-origin:left top;-webkit-text-stroke:0.2px #2a2a2a;">14,00</div>
<div style="left:353.35px;top:185.76px;font-family:'Liberation Sans',sans-serif;font-size:14px;line-height:14px;color:#2a2a2a;white-space:pre;transform:scaleX(0.9);transform-origin:left top;-webkit-text-stroke:0.2px #2a2a2a;">13,50</div>
<div style="left:417.78px;top:185.76px;font-family:'Liberation Sans',sans-serif;font-size:14px;line-height:14px;color:#2a2a2a;white-space:pre;transform:scaleX(0.9);transform-origin:left top;-webkit-text-stroke:0.2px #2a2a2a;">13,00</div>
<div style="left:482.21px;top:185.76px;font-family:'Liberation Sans',sans-serif;font-size:14px;line-height:14px;color:#2a2a2a;white-space:pre;transform:scaleX(0.9);transform-origin:left top;-webkit-text-stroke:0.2px #2a2a2a;">12,50</div>
<div style="left:546.64px;top:185.76px;font-family:'Liberation Sans',sans-serif;font-size:14px;line-height:14px;color:#2a2a2a;white-space:pre;transform:scaleX(0.9);transform-origin:left top;-webkit-text-stroke:0.2px #2a2a2a;">13,00</div>
<div style="left:611.07px;top:185.76px;font-family:'Liberation Sans',sans-serif;font-size:14px;line-height:14px;color:#2a2a2a;white-space:pre;transform:scaleX(0.9);transform-origin:left top;-webkit-text-stroke:0.2px #2a2a2a;">13,50</div>
<div style="left:675.50px;top:185.76px;font-family:'Liberation Sans',sans-serif;font-size:14px;line-height:14px;color:#2a2a2a;white-space:pre;transform:scaleX(0.9);transform-origin:left top;-webkit-text-stroke:0.2px #2a2a2a;">14,00</div>
<div style="left:739.93px;top:185.76px;font-family:'Liberation Sans',sans-serif;font-size:14px;line-height:14px;color:#2a2a2a;white-space:pre;transform:scaleX(0.9);transform-origin:left top;-webkit-text-stroke:0.2px #2a2a2a;">14,50</div>
<div style="left:804.36px;top:185.76px;font-family:'Liberation Sans',sans-serif;font-size:14px;line-height:14px;color:#2a2a2a;white-space:pre;transform:scaleX(0.9);transform-origin:left top;-webkit-text-stroke:0.2px #2a2a2a;">14,00</div>
<div style="left:868.79px;top:185.76px;font-family:'Liberation Sans',sans-serif;font-size:14px;line-height:14px;color:#2a2a2a;white-space:pre;transform:scaleX(0.9);transform-origin:left top;-webkit-text-stroke:0.2px #2a2a2a;">13,50</div>
<div style="left:93.43px;top:204.70px;width:837.59px;height:20.90px;background:#e9ecf5;"></div>
<div style="left:92.73px;top:204.70px;width:1.40px;height:20.90px;background:#c4c8d0;"></div>
<div style="left:157.16px;top:204.70px;width:1.40px;height:20.90px;background:#c4c8d0;"></div>
<div style="left:221.59px;top:204.70px;width:1.40px;height:20.90px;background:#c4c8d0;"></div>
<div style="left:286.02px;top:204.70px;width:1.40px;height:20.90px;background:#c4c8d0;"></div>
<div style="left:350.45px;top:204.70px;width:1.40px;height:20.90px;background:#c4c8d0;"></div>
<div style="left:414.88px;top:204.70px;width:1.40px;height:20.90px;background:#c4c8d0;"></div>
<div style="left:479.31px;top:204.70px;width:1.40px;height:20.90px;background:#c4c8d0;"></div>
<div style="left:543.74px;top:204.70px;width:1.40px;height:20.90px;background:#c4c8d0;"></div>
<div style="left:608.17px;top:204.70px;width:1.40px;height:20.90px;background:#c4c8d0;"></div>
<div style="left:672.60px;top:204.70px;width:1.40px;height:20.90px;background:#c4c8d0;"></div>
<div style="left:737.03px;top:204.70px;width:1.40px;height:20.90px;background:#c4c8d0;"></div>
<div style="left:801.46px;top:204.70px;width:1.40px;height:20.90px;background:#c4c8d0;"></div>
<div style="left:865.89px;top:204.70px;width:1.40px;height:20.90px;background:#c4c8d0;"></div>
<div style="left:930.32px;top:204.70px;width:1.40px;height:20.90px;background:#c4c8d0;"></div>
<div style="left:93.43px;top:225.10px;width:837.59px;height:1.00px;background:#c4c8d0;"></div>
<div style="left:95.26px;top:206.86px;width:60px;text-align:right;font-family:'Liberation Sans',sans-serif;font-size:14px;line-height:14px;color:#2a2a2a;white-space:pre;transform:scaleX(0.9);transform-origin:right top;-webkit-text-stroke:0.2px #2a2a2a;">2023</div>
<div style="left:160.06px;top:206.86px;font-family:'Liberation Sans',sans-serif;font-size:14px;line-height:14px;color:#2a2a2a;white-space:pre;transform:scaleX(0.9);transform-origin:left top;-webkit-text-stroke:0.2px #2a2a2a;">13,00</div>
<div style="left:224.49px;top:206.86px;font-family:'Liberation Sans',sans-serif;font-size:14px;line-height:14px;color:#2a2a2a;white-space:pre;transform:scaleX(0.9);transform-origin:left top;-webkit-text-stroke:0.2px #2a2a2a;">12,50</div>
<div style="left:288.92px;top:206.86px;font-family:'Liberation Sans',sans-serif;font-size:14px;line-height:14px;color:#2a2a2a;white-space:pre;transform:scaleX(0.9);transform-origin:left top;-webkit-text-stroke:0.2px #2a2a2a;">12,00</div>
<div style="left:353.35px;top:206.86px;font-family:'Liberation Sans',sans-serif;font-size:14px;line-height:14px;color:#2a2a2a;white-space:pre;transform:scaleX(0.9);transform-origin:left top;-webkit-text-stroke:0.2px #2a2a2a;">12,50</div>
<div style="left:417.78px;top:206.86px;font-family:'Liberation Sans',sans-serif;font-size:14px;line-height:14px;color:#2a2a2a;white-space:pre;transform:scaleX(0.9);transform-origin:left top;-webkit-text-stroke:0.2px #2a2a2a;">13,00</div>
<div style="left:482.21px;top:206.86px;font-family:'Liberation Sans',sans-serif;font-size:14px;line-height:14px;color:#2a2a2a;white-space:pre;transform:scaleX(0.9);transform-origin:left top;-webkit-text-stroke:0.2px #2a2a2a;">13,50</div>
<div style="left:546.64px;top:206.86px;font-family:'Liberation Sans',sans-serif;font-size:14px;line-height:14px;color:#2a2a2a;white-space:pre;transform:scaleX(0.9);transform-origin:left top;-webkit-text-stroke:0.2px #2a2a2a;">14,00</div>
<div style="left:611.07px;top:206.86px;font-family:'Liberation Sans',sans-serif;font-size:14px;line-height:14px;color:#2a2a2a;white-space:pre;transform:scaleX(0.9);transform-origin:left top;-webkit-text-stroke:0.2px #2a2a2a;">13,80</div>
<div style="left:675.50px;top:206.86px;font-family:'Liberation Sans',sans-serif;font-size:14px;line-height:14px;color:#2a2a2a;white-space:pre;transform:scaleX(0.9);transform-origin:left top;-webkit-text-stroke:0.2px #2a2a2a;">14,20</div>
<div style="left:739.93px;top:206.86px;font-family:'Liberation Sans',sans-serif;font-size:14px;line-height:14px;color:#2a2a2a;white-space:pre;transform:scaleX(0.9);transform-origin:left top;-webkit-text-stroke:0.2px #2a2a2a;">14,50</div>
<div style="left:804.36px;top:206.86px;font-family:'Liberation Sans',sans-serif;font-size:14px;line-height:14px;color:#2a2a2a;white-space:pre;transform:scaleX(0.9);transform-origin:left top;-webkit-text-stroke:0.2px #2a2a2a;">14,80</div>
<div style="left:868.79px;top:206.86px;font-family:'Liberation Sans',sans-serif;font-size:14px;line-height:14px;color:#2a2a2a;white-space:pre;transform:scaleX(0.9);transform-origin:left top;-webkit-text-stroke:0.2px #2a2a2a;">15,00</div>
<div style="left:93.43px;top:225.60px;width:837.59px;height:21.30px;background:#cbced6;"></div>
<div style="left:92.73px;top:225.60px;width:1.40px;height:21.30px;background:#c4c8d0;"></div>
<div style="left:157.16px;top:225.60px;width:1.40px;height:21.30px;background:#c4c8d0;"></div>
<div style="left:221.59px;top:225.60px;width:1.40px;height:21.30px;background:#c4c8d0;"></div>
<div style="left:286.02px;top:225.60px;width:1.40px;height:21.30px;background:#c4c8d0;"></div>
<div style="left:350.45px;top:225.60px;width:1.40px;height:21.30px;background:#c4c8d0;"></div>
<div style="left:414.88px;top:225.60px;width:1.40px;height:21.30px;background:#c4c8d0;"></div>
<div style="left:479.31px;top:225.60px;width:1.40px;height:21.30px;background:#c4c8d0;"></div>
<div style="left:543.74px;top:225.60px;width:1.40px;height:21.30px;background:#c4c8d0;"></div>
<div style="left:608.17px;top:225.60px;width:1.40px;height:21.30px;background:#c4c8d0;"></div>
<div style="left:672.60px;top:225.60px;width:1.40px;height:21.30px;background:#c4c8d0;"></div>
<div style="left:737.03px;top:225.60px;width:1.40px;height:21.30px;background:#c4c8d0;"></div>
<div style="left:801.46px;top:225.60px;width:1.40px;height:21.30px;background:#c4c8d0;"></div>
<div style="left:865.89px;top:225.60px;width:1.40px;height:21.30px;background:#c4c8d0;"></div>
<div style="left:930.32px;top:225.60px;width:1.40px;height:21.30px;background:#c4c8d0;"></div>
<div style="left:93.43px;top:246.40px;width:837.59px;height:1.00px;background:#c4c8d0;"></div>
<div style="left:95.26px;top:227.76px;width:60px;text-align:right;font-family:'Liberation Sans',sans-serif;font-size:14px;line-height:14px;color:#2a2a2a;white-space:pre;transform:scaleX(0.9);transform-origin:right top;-webkit-text-stroke:0.2px #2a2a2a;">2024</div>
<div style="left:160.06px;top:227.76px;font-family:'Liberation Sans',sans-serif;font-size:14px;line-height:14px;color:#2a2a2a;white-space:pre;transform:scaleX(0.9);transform-origin:left top;-webkit-text-stroke:0.2px #2a2a2a;">14,00</div>
<div style="left:224.49px;top:227.76px;font-family:'Liberation Sans',sans-serif;font-size:14px;line-height:14px;color:#2a2a2a;white-space:pre;transform:scaleX(0.9);transform-origin:left top;-webkit-text-stroke:0.2px #2a2a2a;">14,50</div>
<div style="left:288.92px;top:227.76px;font-family:'Liberation Sans',sans-serif;font-size:14px;line-height:14px;color:#2a2a2a;white-space:pre;transform:scaleX(0.9);transform-origin:left top;-webkit-text-stroke:0.2px #2a2a2a;">15,00</div>
<div style="left:353.35px;top:227.76px;font-family:'Liberation Sans',sans-serif;font-size:14px;line-height:14px;color:#2a2a2a;white-space:pre;transform:scaleX(0.9);transform-origin:left top;-webkit-text-stroke:0.2px #2a2a2a;">15,50</div>
<div style="left:417.78px;top:227.76px;font-family:'Liberation Sans',sans-serif;font-size:14px;line-height:14px;color:#2a2a2a;white-space:pre;transform:scaleX(0.9);transform-origin:left top;-webkit-text-stroke:0.2px #2a2a2a;">16,00</div>
<div style="left:482.21px;top:227.76px;font-family:'Liberation Sans',sans-serif;font-size:14px;line-height:14px;color:#2a2a2a;white-space:pre;transform:scaleX(0.9);transform-origin:left top;-webkit-text-stroke:0.2px #2a2a2a;">16,50</div>
<div style="left:546.64px;top:227.76px;font-family:'Liberation Sans',sans-serif;font-size:14px;line-height:14px;color:#2a2a2a;white-space:pre;transform:scaleX(0.9);transform-origin:left top;-webkit-text-stroke:0.2px #2a2a2a;">17,00</div>
<div style="left:611.07px;top:227.76px;font-family:'Liberation Sans',sans-serif;font-size:14px;line-height:14px;color:#2a2a2a;white-space:pre;transform:scaleX(0.9);transform-origin:left top;-webkit-text-stroke:0.2px #2a2a2a;">17,50</div>
<div style="left:675.50px;top:227.76px;font-family:'Liberation Sans',sans-serif;font-size:14px;line-height:14px;color:#2a2a2a;white-space:pre;transform:scaleX(0.9);transform-origin:left top;-webkit-text-stroke:0.2px #2a2a2a;">18,00</div>
<div style="left:739.93px;top:227.76px;font-family:'Liberation Sans',sans-serif;font-size:14px;line-height:14px;color:#2a2a2a;white-space:pre;transform:scaleX(0.9);transform-origin:left top;-webkit-text-stroke:0.2px #2a2a2a;">18,50</div>
<div style="left:804.36px;top:227.76px;font-family:'Liberation Sans',sans-serif;font-size:14px;line-height:14px;color:#2a2a2a;white-space:pre;transform:scaleX(0.9);transform-origin:left top;-webkit-text-stroke:0.2px #2a2a2a;">19,00</div>
<div style="left:868.79px;top:227.76px;font-family:'Liberation Sans',sans-serif;font-size:14px;line-height:14px;color:#2a2a2a;white-space:pre;transform:scaleX(0.9);transform-origin:left top;-webkit-text-stroke:0.2px #2a2a2a;">19,50</div>
<div style="left:3.00px;top:315.00px;width:970.20px;height:32.20px;background:#525252;"></div>
<svg style="left:31px;top:325px" width="8" height="12"><path d="M6.3 1 L1.6 5.6 L6.3 10.2" stroke="#a0a0a0" stroke-width="1.6" fill="none"/></svg>
<svg style="left:64px;top:325px" width="8" height="12"><path d="M1.7 1 L6.4 5.6 L1.7 10.2" stroke="#a0a0a0" stroke-width="1.6" fill="none"/></svg>
<div style="left:119.30px;top:316.20px;width:90.00px;height:26.90px;background:#fff;border-radius:4px 0 6px 6px;"></div>
<div style="left:128.50px;top:324.80px;font-family:'Liberation Sans',sans-serif;font-size:13.1px;line-height:13.1px;color:#3a3a3a;white-space:pre;font-weight:bold;">Dashboard</div>
<div style="left:214.20px;top:310.00px;width:57.80px;height:33.10px;background:#fff;border-radius:0 0 6px 6px;"></div>
<div style="left:203.00px;top:316.20px;width:14.00px;height:6.00px;background:#fff;"></div>
<div style="left:205.70px;top:315.20px;width:8.50px;height:29.00px;background:#525252;border-radius:4px 4px 0 0;"></div>
<div style="left:209.20px;top:321.50px;width:1.50px;height:19.00px;background:#8c8c8c;border-radius:1px;"></div>
<div style="left:222.80px;top:321.68px;font-family:'Liberation Sans',sans-serif;font-size:12.6px;line-height:12.6px;color:#3a3a3a;white-space:pre;font-weight:bold;">Sheet1</div>
<div style="left:223.00px;top:337.80px;width:41.00px;height:2.20px;background:#1e7b4a;"></div>
<div style="left:268.00px;top:315.00px;width:8.00px;height:6.00px;background:#fff;"></div>
<div style="left:272.00px;top:315.00px;width:30.00px;height:29.00px;background:#525252;border-radius:4px 0 0 0;"></div>
<div style="left:275.30px;top:321.50px;width:1.50px;height:19.00px;background:#8c8c8c;border-radius:1px;"></div>
<svg style="left:319px;top:324.5px" width="12" height="12"><path d="M6 0.5 V11.5 M0.5 6 H11.5" stroke="#9c9c9c" stroke-width="1.2" fill="none"/></svg>
<div style="left:587.00px;top:327.30px;width:2.20px;height:2.20px;background:#d8d8d8;border-radius:1px;"></div>
<div style="left:587.00px;top:331.60px;width:2.20px;height:2.20px;background:#d8d8d8;border-radius:1px;"></div>
<div style="left:587.00px;top:335.90px;width:2.20px;height:2.20px;background:#d8d8d8;border-radius:1px;"></div>
<div style="left:605.20px;top:322.00px;width:347.80px;height:17.00px;background:#373737;border-radius:9px;"></div>
<svg style="left:609px;top:326.5px" width="8" height="9"><path d="M7.5 0 L7.5 8.5 L0 4.25 Z" fill="#c4c4c4"/></svg>
<div style="left:621.00px;top:326.00px;width:300.00px;height:9.30px;background:#c8c8c8;border-radius:5px;"></div>
<svg style="left:942px;top:326.5px" width="8" height="9"><path d="M0 0 L0 8.5 L7.5 4.25 Z" fill="#c4c4c4"/></svg>
<div style="left:953.80px;top:62.00px;width:15.70px;height:255.00px;background:#373737;border-radius:8px;"></div>
<svg style="left:957.5px;top:65.8px" width="10" height="8"><path d="M4.75 0 L9.5 7 L0 7 Z" fill="#c4c4c4"/></svg>
<div style="left:957.50px;top:77.80px;width:9.70px;height:115.50px;background:#c8c8c8;border-radius:5px;"></div>
<svg style="left:957.5px;top:306px" width="10" height="8"><path d="M0 0 L9.5 0 L4.75 7 Z" fill="#c4c4c4"/></svg>
<div style="left:3.00px;top:347.00px;width:970.20px;height:1.30px;background:#444444;"></div>
<div style="left:3.00px;top:348.00px;width:970.20px;height:21.20px;background:#515151;border-radius:0 0 8px 8px;"></div>
<svg style="left:0px;top:357.20px" width="984" height="14"><path d="M3.3 3.5 A8.3 8.3 0 0 0 11.3 12.2" stroke="#a07840" stroke-width="1.3" fill="none" opacity="0.6"/><path d="M972.9 3.5 A8.3 8.3 0 0 1 964.9 12.2" stroke="#a07840" stroke-width="1.3" fill="none" opacity="0.6"/></svg>
<div style="left:15.30px;top:352.53px;font-family:'Liberation Sans',sans-serif;font-size:11.7px;line-height:11.7px;color:#dcdcdc;white-space:pre;font-weight:bold;transform:scaleX(0.9);transform-origin:left top;">Point</div>
<svg style="left:64px;top:350px" width="17" height="17"><g stroke="#dcdcdc" stroke-width="1.35" fill="none" stroke-linecap="round" stroke-linejoin="round"><circle cx="7.4" cy="3.6" r="2"/><path d="M5.3 5.6 L2.2 4.6 Q1.2 5 1.8 6 L4.8 7.6 L4.8 10.2 L3.9 14.4 Q4.3 15.4 5.2 15 L7 11.2 M9.5 5.6 L12.6 4.6 Q13.6 5 13 6 L10 7.6 L9.8 9.6"/><path d="M9.4 10.6 L14.8 15.8 M14.8 10.6 L9.4 15.8"/></g></svg>
<div style="left:83.60px;top:352.53px;font-family:'Liberation Sans',sans-serif;font-size:11.7px;line-height:11.7px;color:#e6e6e6;white-space:pre;font-weight:bold;transform:scaleX(0.91);transform-origin:left top;">Accessibility: Investigate</div>
<svg style="left:672px;top:351px" width="15" height="14"><g stroke="#5e5e5e" stroke-width="1" fill="none"><rect x="0.5" y="0.5" width="14" height="13"/><path d="M5 0.5 V13.5 M10 0.5 V13.5 M0.5 4.8 H14.5 M0.5 9.2 H14.5"/></g></svg>
<svg style="left:713px;top:351px" width="15" height="14"><g stroke="#5e5e5e" stroke-width="1" fill="none"><rect x="0.5" y="0.5" width="14" height="13"/><rect x="3.5" y="2.5" width="8" height="9"/></g></svg>
<svg style="left:754px;top:351px" width="15" height="14"><g stroke="#5e5e5e" stroke-width="1" fill="none"><path d="M0.5 0.5 V13.5 H14.5 V0.5 M4.5 0.5 V8.5 H10.5 V0.5"/></g></svg>
<div style="left:787.00px;top:358.00px;width:7.00px;height:1.00px;background:#5e5e5e;"></div>
<div style="left:800.00px;top:358.00px;width:100.00px;height:1.50px;background:#9c9c9c;"></div>
<div style="left:849.30px;top:354.50px;width:1.50px;height:8.00px;background:#9c9c9c;"></div>
<svg style="left:905px;top:354.5px" width="8" height="8"><path d="M4 0 V8 M0 4 H8" stroke="#5e5e5e" stroke-width="1" fill="none"/></svg>
<div style="left:927.50px;top:352.53px;font-family:'Liberation Sans',sans-serif;font-size:11.7px;line-height:11.7px;color:#5e5e5e;white-space:pre;transform:scaleX(0.85);transform-origin:left top;">100%</div>
<div style="left:94.23px;top:142.40px;width:835.19px;height:103.30px;box-sizing:border-box;border:1px solid #e2eafa;"></div>
<div style="left:92.23px;top:140.40px;width:839.19px;height:107.30px;box-sizing:border-box;border:2px solid #4570b5;"></div>
<div style="left:927.52px;top:243.40px;width:3.00px;height:3.00px;background:#4a72b8;"></div>
<svg style="left:156px;top:99px" width="68" height="23"><rect x="2" y="2" width="63.6" height="19.6" fill="none" stroke="#1d6b40" stroke-width="2" stroke-dasharray="4.6 2.6"/></svg>
<div style="left:151.80px;top:94.80px;width:76.50px;height:33.50px;box-sizing:border-box;border:2.2px solid #d41a1a;"></div>
<div style="left:217.80px;top:25.80px;width:284.20px;height:28.60px;box-sizing:border-box;border:2.6px solid #d20f0f;"></div>
<div style="left:168.20px;top:187.30px;width:384.30px;height:17.20px;box-sizing:border-box;background:#fdfdf8;border:1.3px solid #7c7c7c;border-radius:4px;"></div>
<div style="left:174.10px;top:189.44px;font-family:'Liberation Sans',sans-serif;font-size:11.6px;line-height:11.6px;color:#333;white-space:pre;">VLOOKUP(lookup_value, table_array, <b>col_index_num</b>, [range_lookup])</div>
</div>
</div></body></html>
